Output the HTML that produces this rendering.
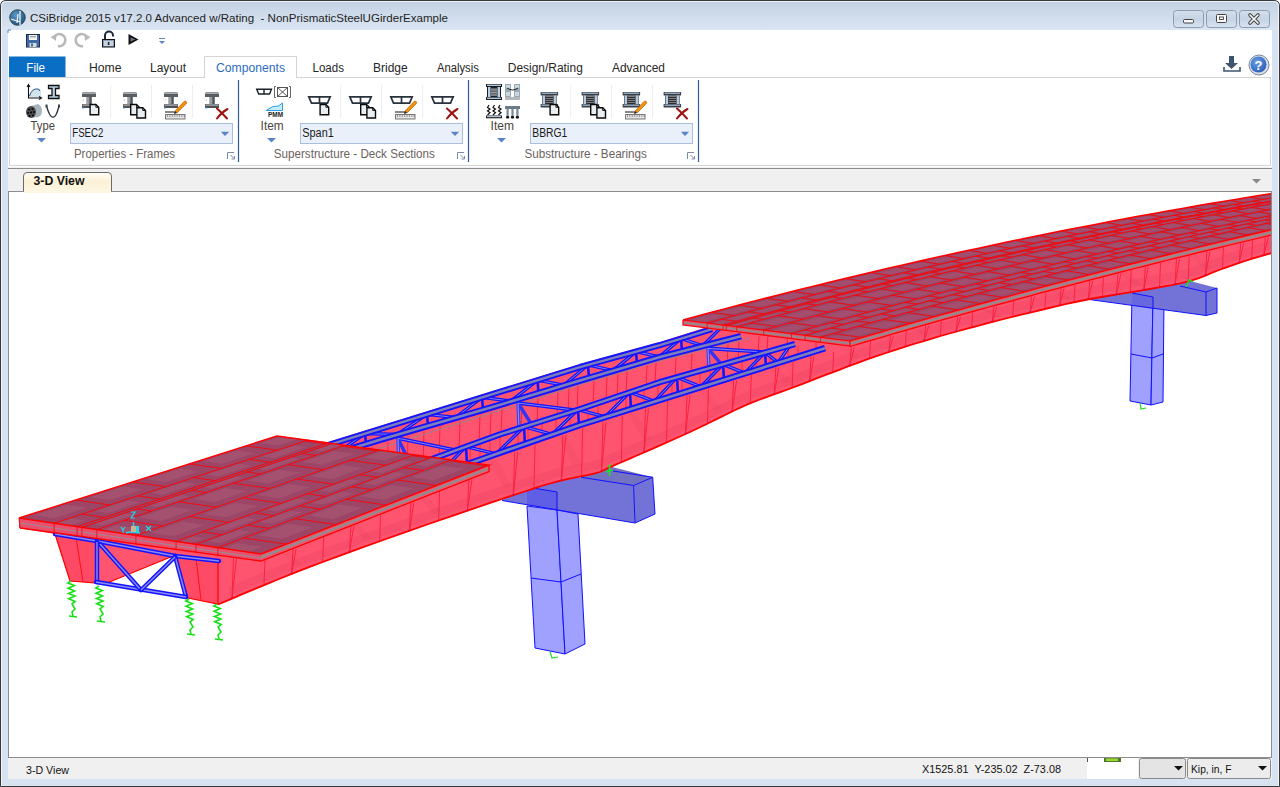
<!DOCTYPE html><html><head><meta charset="utf-8"><style>
*{margin:0;padding:0}
html,body{width:1280px;height:787px;overflow:hidden;background:#fff;font-family:"Liberation Sans",sans-serif}
svg{position:absolute;left:0;top:0}
</style></head><body>
<svg width="1280" height="787" font-family="Liberation Sans">
<defs>
 <linearGradient id="tg" x1="0" y1="0" x2="0" y2="1"><stop offset="0" stop-color="#c2d1e3"/><stop offset="0.6" stop-color="#d2deed"/><stop offset="1" stop-color="#d9e5f2"/></linearGradient>
 <linearGradient id="bg" x1="0" y1="0" x2="0" y2="1"><stop offset="0" stop-color="#d6e0ec"/><stop offset="0.5" stop-color="#c5d3e4"/><stop offset="1" stop-color="#d8e3f0"/></linearGradient>
 <linearGradient id="tabg" x1="0" y1="0" x2="0" y2="1"><stop offset="0" stop-color="#fffdf4"/><stop offset="0.5" stop-color="#fcf1d6"/><stop offset="1" stop-color="#fdf6e2"/></linearGradient>
 <radialGradient id="lg" cx="40%" cy="35%" r="70%"><stop offset="0" stop-color="#5a9ac8"/><stop offset="1" stop-color="#1d4f78"/></radialGradient>
 <radialGradient id="hg" cx="40%" cy="35%" r="70%"><stop offset="0" stop-color="#6aa0e8"/><stop offset="1" stop-color="#2a5cb8"/></radialGradient>
</defs>
<!-- window frame -->
<path d="M0.5,786.5 V6 Q0.5,0.5 6,0.5 H1274 Q1279.5,0.5 1279.5,6 V786.5 Z" fill="#d7e3f1" stroke="#3a3a3a"/>
<path d="M1.5,30 V6.5 Q1.5,1.5 6.5,1.5 H1273.5 Q1278.5,1.5 1278.5,6.5 V30 Z" fill="url(#tg)"/>
<path d="M1.5,786 V7 Q1.5,1.5 7,1.5 H1273 Q1278.5,1.5 1278.5,7 V786" fill="none" stroke="#f2f6fb" stroke-width="1" opacity="0.8"/>
<circle cx="17.5" cy="17.5" r="7.8" fill="url(#lg)" stroke="#2a3a48" stroke-width="0.8"/>
<path d="M20,11 V25 M18,14 L17,23 M11,19 L20,22" stroke="#f0f4f8" stroke-width="1.3" fill="none"/>
<text x="30" y="22.4" font-size="11.5" fill="#1e1e1e" font-weight="normal" textLength="418" lengthAdjust="spacingAndGlyphs" xml:space="preserve">CSiBridge 2015 v17.2.0 Advanced w/Rating&#160;&#160;- NonPrismaticSteelUGirderExample</text>
<rect x="1173.5" y="10.5" width="30" height="17" rx="3" fill="url(#bg)" stroke="#8d9bb0"/>
<rect x="1206.5" y="10.5" width="30" height="17" rx="3" fill="url(#bg)" stroke="#8d9bb0"/>
<rect x="1239.5" y="10.5" width="30" height="17" rx="3" fill="url(#bg)" stroke="#8d9bb0"/>
<rect x="1183.5" y="19.5" width="10" height="3.5" rx="1" fill="#f8f8f8" stroke="#444"/>
<rect x="1216.5" y="14.5" width="10" height="8" rx="1" fill="#f8f8f8" stroke="#444"/><rect x="1219.5" y="17" width="4" height="2.5" fill="none" stroke="#444" stroke-width="0.9"/>
<path d="M1250,15 L1258,23 M1258,15 L1250,23" stroke="#444" stroke-width="3.6" stroke-linecap="round"/><path d="M1250,15 L1258,23 M1258,15 L1250,23" stroke="#fafafa" stroke-width="1.6" stroke-linecap="round"/>
<!-- content -->
<rect x="8" y="30" width="1264" height="749" fill="#fff"/>
<path d="M8,30 h3 M8,30 v3" stroke="#5b83c8" stroke-width="1"/>
<!-- QAT -->
<g transform="translate(26,34)"><rect x="0.5" y="0.5" width="13" height="12.5" fill="#3f6aa8" stroke="#1e2e44"/><rect x="3" y="1" width="8" height="5" fill="#f4f4f4"/><line x1="4" y1="2.8" x2="10" y2="2.8" stroke="#555" stroke-width="0.7"/><rect x="3.5" y="9" width="7" height="4" fill="#d8d8d8"/><rect x="5" y="9.5" width="2" height="3" fill="#3f6aa8"/></g>
<path d="M58,46 A6,6 0 1 0 54.5,36.5" fill="none" stroke="#b8b8b8" stroke-width="2.6"/><path d="M50.5,37 L56.5,34 L56,41 Z" fill="#b8b8b8"/>
<path d="M83,46 A6,6 0 1 1 86.5,36.5" fill="none" stroke="#b8b8b8" stroke-width="2.6"/><path d="M90.5,37 L84.5,34 L85,41 Z" fill="#b8b8b8"/>
<path d="M105,39 v-3.5 a4,4 0 0 1 8,0 v1" fill="none" stroke="#1a2a3a" stroke-width="2"/><rect x="102.5" y="39.5" width="12" height="7.5" fill="#8aa0b8" stroke="#111"/><rect x="104" y="41" width="9" height="5" fill="#c8d4e0"/><rect x="107.8" y="42" width="1.6" height="3" fill="#222"/>
<path d="M128.5,34 l10,5.5 -10,5.5z" fill="#111"/><path d="M130.5,37.5 l5,2 -5,2z" fill="#6a7888"/>
<path d="M159,41 h6 l-3,3z" fill="#5b83c8"/><line x1="159" y1="38.5" x2="165" y2="38.5" stroke="#5b83c8"/>
<!-- tabs -->
<rect x="9" y="56.5" width="56.5" height="20.5" fill="#0b6ec5"/>
<text x="26.3" y="72" font-size="12" fill="#ffffff" font-weight="normal" textLength="18.8" lengthAdjust="spacingAndGlyphs" >File</text>
<path d="M9,77.5 H204.5 V56.5 H296.5 V77.5 H1270.5" fill="none" stroke="#d4d4d4"/>
<rect x="205" y="57" width="91" height="21" fill="#fff"/>
<text x="89" y="72" font-size="12" fill="#262626" font-weight="normal" textLength="32.5" lengthAdjust="spacingAndGlyphs" >Home</text><text x="150" y="72" font-size="12" fill="#262626" font-weight="normal" textLength="36" lengthAdjust="spacingAndGlyphs" >Layout</text><text x="216" y="72" font-size="12" fill="#2b6bbf" font-weight="normal" textLength="69" lengthAdjust="spacingAndGlyphs" >Components</text><text x="312.5" y="72" font-size="12" fill="#262626" font-weight="normal" textLength="31.5" lengthAdjust="spacingAndGlyphs" >Loads</text><text x="373" y="72" font-size="12" fill="#262626" font-weight="normal" textLength="34.7" lengthAdjust="spacingAndGlyphs" >Bridge</text><text x="437" y="72" font-size="12" fill="#262626" font-weight="normal" textLength="41.8" lengthAdjust="spacingAndGlyphs" >Analysis</text><text x="507.8" y="72" font-size="12" fill="#262626" font-weight="normal" textLength="75" lengthAdjust="spacingAndGlyphs" >Design/Rating</text><text x="612" y="72" font-size="12" fill="#262626" font-weight="normal" textLength="53" lengthAdjust="spacingAndGlyphs" >Advanced</text>
<rect x="9.5" y="77.5" width="1261" height="88" fill="#fff" stroke="#d4d4d4"/>
<rect x="205" y="76.5" width="91" height="2" fill="#fff"/>
<line x1="238.5" y1="80" x2="238.5" y2="162" stroke="#2d5aa0" stroke-width="1.2"/>
<line x1="468.5" y1="80" x2="468.5" y2="162" stroke="#2d5aa0" stroke-width="1.2"/>
<line x1="698.5" y1="80" x2="698.5" y2="162" stroke="#2d5aa0" stroke-width="1.2"/>
<line x1="110.7" y1="85" x2="110.7" y2="118" stroke="#eceef2" stroke-width="1"/><line x1="151.5" y1="85" x2="151.5" y2="118" stroke="#eceef2" stroke-width="1"/><line x1="192.6" y1="85" x2="192.6" y2="118" stroke="#eceef2" stroke-width="1"/><g transform="translate(82,92)"><path d="M1,0 H13 L14,2 V5 H0 V2 Z" fill="#5a5e62"/><path d="M1,0.3 H13 L13.8,2 H0.4 Z" fill="#a8acb0"/><rect x="4.5" y="5" width="5" height="7" fill="#6a6e72"/><rect x="5" y="5" width="2" height="7" fill="#9a9ea2"/><rect x="8.5" y="5" width="1" height="7" fill="#3a3e42"/><path d="M0,12 H14 V16 H0 Z" fill="#4e5256"/><rect x="0.5" y="12.3" width="13" height="1.6" fill="#9a9ea2"/><path d="M0,8 l2,-1.5 v3 z" fill="#dde" /><rect x="0" y="15.5" width="2" height="1" fill="#4aa0e0"/></g><g transform="translate(89.4,103.8)"><path d="M0.7,0.7 H6.5 L9.3,3.5 V11 H0.7 Z" fill="#e8eef2" stroke="#0a0a0a" stroke-width="1.4"/><path d="M6.5,0.7 V3.5 H9.3" fill="none" stroke="#0a0a0a" stroke-width="0.9"/></g><g transform="translate(123,92)"><path d="M1,0 H13 L14,2 V5 H0 V2 Z" fill="#5a5e62"/><path d="M1,0.3 H13 L13.8,2 H0.4 Z" fill="#a8acb0"/><rect x="4.5" y="5" width="5" height="7" fill="#6a6e72"/><rect x="5" y="5" width="2" height="7" fill="#9a9ea2"/><rect x="8.5" y="5" width="1" height="7" fill="#3a3e42"/><path d="M0,12 H14 V16 H0 Z" fill="#4e5256"/><rect x="0.5" y="12.3" width="13" height="1.6" fill="#9a9ea2"/><path d="M0,8 l2,-1.5 v3 z" fill="#dde" /><rect x="0" y="15.5" width="2" height="1" fill="#4aa0e0"/></g><g transform="translate(130,103.8)"><path d="M0.7,0.7 H6.5 L9.3,3.5 V11 H0.7 Z" fill="#e8eef2" stroke="#0a0a0a" stroke-width="1.4"/><path d="M6.5,0.7 V3.5 H9.3" fill="none" stroke="#0a0a0a" stroke-width="0.9"/></g><g transform="translate(136.2,107)"><path d="M0.7,0.7 H6.5 L9.3,3.5 V11 H0.7 Z" fill="#e8eef2" stroke="#0a0a0a" stroke-width="1.4"/><path d="M6.5,0.7 V3.5 H9.3" fill="none" stroke="#0a0a0a" stroke-width="0.9"/></g><g transform="translate(164,92)"><path d="M1,0 H13 L14,2 V5 H0 V2 Z" fill="#5a5e62"/><path d="M1,0.3 H13 L13.8,2 H0.4 Z" fill="#a8acb0"/><rect x="4.5" y="5" width="5" height="7" fill="#6a6e72"/><rect x="5" y="5" width="2" height="7" fill="#9a9ea2"/><rect x="8.5" y="5" width="1" height="7" fill="#3a3e42"/><path d="M0,12 H14 V16 H0 Z" fill="#4e5256"/><rect x="0.5" y="12.3" width="13" height="1.6" fill="#9a9ea2"/><path d="M0,8 l2,-1.5 v3 z" fill="#dde" /><rect x="0" y="15.5" width="2" height="1" fill="#4aa0e0"/></g><g transform="translate(165,114)"><rect x="0.5" y="0.5" width="19.5" height="4.5" fill="#e4e4e4" stroke="#787878"/><line x1="2.5" y1="1" x2="2.5" y2="3" stroke="#777" stroke-width="0.7"/><line x1="4.9" y1="1" x2="4.9" y2="3" stroke="#777" stroke-width="0.7"/><line x1="7.3" y1="1" x2="7.3" y2="3" stroke="#777" stroke-width="0.7"/><line x1="9.7" y1="1" x2="9.7" y2="3" stroke="#777" stroke-width="0.7"/><line x1="12.1" y1="1" x2="12.1" y2="3" stroke="#777" stroke-width="0.7"/><line x1="14.5" y1="1" x2="14.5" y2="3" stroke="#777" stroke-width="0.7"/><line x1="16.9" y1="1" x2="16.9" y2="3" stroke="#777" stroke-width="0.7"/><line x1="19.3" y1="1" x2="19.3" y2="3" stroke="#777" stroke-width="0.7"/></g><line x1="165" y1="112" x2="175" y2="112" stroke="#111" stroke-width="1"/><g transform="translate(175,100)"><path d="M0,11 L9,1.5 Q10.5,0.5 11.5,1.8 Q12.2,3 11,4 L2,13 Z" fill="#f0900c" stroke="#b05a00" stroke-width="0.6"/><path d="M0,11 L2,13 L-1,14 Z" fill="#222"/></g><g transform="translate(205,92)"><path d="M1,0 H13 L14,2 V5 H0 V2 Z" fill="#5a5e62"/><path d="M1,0.3 H13 L13.8,2 H0.4 Z" fill="#a8acb0"/><rect x="4.5" y="5" width="5" height="7" fill="#6a6e72"/><rect x="5" y="5" width="2" height="7" fill="#9a9ea2"/><rect x="8.5" y="5" width="1" height="7" fill="#3a3e42"/><path d="M0,12 H14 V16 H0 Z" fill="#4e5256"/><rect x="0.5" y="12.3" width="13" height="1.6" fill="#9a9ea2"/><path d="M0,8 l2,-1.5 v3 z" fill="#dde" /><rect x="0" y="15.5" width="2" height="1" fill="#4aa0e0"/></g><g transform="translate(216,108)" stroke="#a01414" stroke-width="2" stroke-linecap="round"><path d="M1,0.5 Q6,5 11,10.5"/><path d="M11.5,1 Q6,4 1,10.5"/></g><rect x="70.5" y="123.5" width="162" height="20" fill="#e9f0fa" stroke="#a9bfdc" stroke-width="1"/><path d="M220.8,131.8 h8.4 l-4.2,4.3 z" fill="#5b83c8"/><text x="72.3" y="137" font-size="12" fill="#1a1a1a" font-weight="normal" textLength="31" lengthAdjust="spacingAndGlyphs" >FSEC2</text><text x="74" y="157.5" font-size="12" fill="#6a625e" font-weight="normal" textLength="101" lengthAdjust="spacingAndGlyphs" >Properties - Frames</text><g stroke="#7a8aa8" stroke-width="1" fill="none"><path d="M227.5,159 v-6.5 h6.5"/><path d="M230.5,155 l3.5,3.5 m-2.5,0.5 h3 v-3"/></g><text x="30.6" y="130.3" font-size="12" fill="#4a4440" font-weight="normal" textLength="24.4" lengthAdjust="spacingAndGlyphs" >Type</text><path d="M37,138 h9 l-4.5,4.5 z" fill="#5b83c8"/><line x1="340.7" y1="85" x2="340.7" y2="118" stroke="#eceef2" stroke-width="1"/><line x1="381.5" y1="85" x2="381.5" y2="118" stroke="#eceef2" stroke-width="1"/><line x1="422.6" y1="85" x2="422.6" y2="118" stroke="#eceef2" stroke-width="1"/><g transform="translate(308,96)" fill="#ffffff" stroke="#28323c" stroke-width="1.7"><path d="M0.8,0.8 H22.2 L19.5,7.2 H3.5 Z"/><line x1="11.5" y1="0.8" x2="11.5" y2="7.2"/></g><g transform="translate(319.4,103.8)"><path d="M0.7,0.7 H6.5 L9.3,3.5 V11 H0.7 Z" fill="#e8eef2" stroke="#0a0a0a" stroke-width="1.4"/><path d="M6.5,0.7 V3.5 H9.3" fill="none" stroke="#0a0a0a" stroke-width="0.9"/></g><g transform="translate(349,96)" fill="#ffffff" stroke="#28323c" stroke-width="1.7"><path d="M0.8,0.8 H22.2 L19.5,7.2 H3.5 Z"/><line x1="11.5" y1="0.8" x2="11.5" y2="7.2"/></g><g transform="translate(360,103.8)"><path d="M0.7,0.7 H6.5 L9.3,3.5 V11 H0.7 Z" fill="#e8eef2" stroke="#0a0a0a" stroke-width="1.4"/><path d="M6.5,0.7 V3.5 H9.3" fill="none" stroke="#0a0a0a" stroke-width="0.9"/></g><g transform="translate(366.2,107)"><path d="M0.7,0.7 H6.5 L9.3,3.5 V11 H0.7 Z" fill="#e8eef2" stroke="#0a0a0a" stroke-width="1.4"/><path d="M6.5,0.7 V3.5 H9.3" fill="none" stroke="#0a0a0a" stroke-width="0.9"/></g><g transform="translate(390,96)" fill="#ffffff" stroke="#28323c" stroke-width="1.7"><path d="M0.8,0.8 H22.2 L19.5,7.2 H3.5 Z"/><line x1="11.5" y1="0.8" x2="11.5" y2="7.2"/></g><g transform="translate(395,114)"><rect x="0.5" y="0.5" width="19.5" height="4.5" fill="#e4e4e4" stroke="#787878"/><line x1="2.5" y1="1" x2="2.5" y2="3" stroke="#777" stroke-width="0.7"/><line x1="4.9" y1="1" x2="4.9" y2="3" stroke="#777" stroke-width="0.7"/><line x1="7.3" y1="1" x2="7.3" y2="3" stroke="#777" stroke-width="0.7"/><line x1="9.7" y1="1" x2="9.7" y2="3" stroke="#777" stroke-width="0.7"/><line x1="12.1" y1="1" x2="12.1" y2="3" stroke="#777" stroke-width="0.7"/><line x1="14.5" y1="1" x2="14.5" y2="3" stroke="#777" stroke-width="0.7"/><line x1="16.9" y1="1" x2="16.9" y2="3" stroke="#777" stroke-width="0.7"/><line x1="19.3" y1="1" x2="19.3" y2="3" stroke="#777" stroke-width="0.7"/></g><line x1="395" y1="112" x2="405" y2="112" stroke="#111" stroke-width="1"/><g transform="translate(405,100)"><path d="M0,11 L9,1.5 Q10.5,0.5 11.5,1.8 Q12.2,3 11,4 L2,13 Z" fill="#f0900c" stroke="#b05a00" stroke-width="0.6"/><path d="M0,11 L2,13 L-1,14 Z" fill="#222"/></g><g transform="translate(431,96)" fill="#ffffff" stroke="#28323c" stroke-width="1.7"><path d="M0.8,0.8 H22.2 L19.5,7.2 H3.5 Z"/><line x1="11.5" y1="0.8" x2="11.5" y2="7.2"/></g><g transform="translate(446,108)" stroke="#a01414" stroke-width="2" stroke-linecap="round"><path d="M1,0.5 Q6,5 11,10.5"/><path d="M11.5,1 Q6,4 1,10.5"/></g><rect x="300.5" y="123.5" width="162" height="20" fill="#e9f0fa" stroke="#a9bfdc" stroke-width="1"/><path d="M450.8,131.8 h8.4 l-4.2,4.3 z" fill="#5b83c8"/><text x="302.3" y="137" font-size="12" fill="#1a1a1a" font-weight="normal" textLength="31.5" lengthAdjust="spacingAndGlyphs" >Span1</text><text x="273.8" y="157.5" font-size="12" fill="#6a625e" font-weight="normal" textLength="161" lengthAdjust="spacingAndGlyphs" >Superstructure - Deck Sections</text><g stroke="#7a8aa8" stroke-width="1" fill="none"><path d="M457.5,159 v-6.5 h6.5"/><path d="M460.5,155 l3.5,3.5 m-2.5,0.5 h3 v-3"/></g><text x="260.6" y="130.3" font-size="12" fill="#4a4440" font-weight="normal" textLength="23" lengthAdjust="spacingAndGlyphs" >Item</text><path d="M267,138 h9 l-4.5,4.5 z" fill="#5b83c8"/><line x1="570.7" y1="85" x2="570.7" y2="118" stroke="#eceef2" stroke-width="1"/><line x1="611.5" y1="85" x2="611.5" y2="118" stroke="#eceef2" stroke-width="1"/><line x1="652.6" y1="85" x2="652.6" y2="118" stroke="#eceef2" stroke-width="1"/><g transform="translate(540.6,92)"><rect x="0" y="0" width="17.5" height="3.5" rx="0.5" fill="#3a4048"/><rect x="1" y="0.6" width="15.5" height="1.2" fill="#a8c0d8"/><rect x="0" y="12" width="17.5" height="3.5" rx="0.5" fill="#3a4048"/><rect x="1" y="12.6" width="15.5" height="1.2" fill="#a8c0d8"/><rect x="1.5" y="3.5" width="14.5" height="8.5" fill="#2a2e34"/><rect x="2" y="3.5" width="2.5" height="8.5" fill="#b8cce0"/><rect x="13" y="3.5" width="2.5" height="8.5" fill="#b8cce0"/><line x1="5" y1="4.5" x2="12.5" y2="4.5" stroke="#8a8a8a" stroke-width="0.9"/><line x1="5" y1="6.5" x2="12.5" y2="6.5" stroke="#8a8a8a" stroke-width="0.9"/><line x1="5" y1="8.5" x2="12.5" y2="8.5" stroke="#8a8a8a" stroke-width="0.9"/><line x1="5" y1="10.5" x2="12.5" y2="10.5" stroke="#8a8a8a" stroke-width="0.9"/></g><g transform="translate(549.4,103.8)"><path d="M0.7,0.7 H6.5 L9.3,3.5 V11 H0.7 Z" fill="#e8eef2" stroke="#0a0a0a" stroke-width="1.4"/><path d="M6.5,0.7 V3.5 H9.3" fill="none" stroke="#0a0a0a" stroke-width="0.9"/></g><g transform="translate(581.6,92)"><rect x="0" y="0" width="17.5" height="3.5" rx="0.5" fill="#3a4048"/><rect x="1" y="0.6" width="15.5" height="1.2" fill="#a8c0d8"/><rect x="0" y="12" width="17.5" height="3.5" rx="0.5" fill="#3a4048"/><rect x="1" y="12.6" width="15.5" height="1.2" fill="#a8c0d8"/><rect x="1.5" y="3.5" width="14.5" height="8.5" fill="#2a2e34"/><rect x="2" y="3.5" width="2.5" height="8.5" fill="#b8cce0"/><rect x="13" y="3.5" width="2.5" height="8.5" fill="#b8cce0"/><line x1="5" y1="4.5" x2="12.5" y2="4.5" stroke="#8a8a8a" stroke-width="0.9"/><line x1="5" y1="6.5" x2="12.5" y2="6.5" stroke="#8a8a8a" stroke-width="0.9"/><line x1="5" y1="8.5" x2="12.5" y2="8.5" stroke="#8a8a8a" stroke-width="0.9"/><line x1="5" y1="10.5" x2="12.5" y2="10.5" stroke="#8a8a8a" stroke-width="0.9"/></g><g transform="translate(590,103.8)"><path d="M0.7,0.7 H6.5 L9.3,3.5 V11 H0.7 Z" fill="#e8eef2" stroke="#0a0a0a" stroke-width="1.4"/><path d="M6.5,0.7 V3.5 H9.3" fill="none" stroke="#0a0a0a" stroke-width="0.9"/></g><g transform="translate(596.2,107)"><path d="M0.7,0.7 H6.5 L9.3,3.5 V11 H0.7 Z" fill="#e8eef2" stroke="#0a0a0a" stroke-width="1.4"/><path d="M6.5,0.7 V3.5 H9.3" fill="none" stroke="#0a0a0a" stroke-width="0.9"/></g><g transform="translate(622.6,92)"><rect x="0" y="0" width="17.5" height="3.5" rx="0.5" fill="#3a4048"/><rect x="1" y="0.6" width="15.5" height="1.2" fill="#a8c0d8"/><rect x="0" y="12" width="17.5" height="3.5" rx="0.5" fill="#3a4048"/><rect x="1" y="12.6" width="15.5" height="1.2" fill="#a8c0d8"/><rect x="1.5" y="3.5" width="14.5" height="8.5" fill="#2a2e34"/><rect x="2" y="3.5" width="2.5" height="8.5" fill="#b8cce0"/><rect x="13" y="3.5" width="2.5" height="8.5" fill="#b8cce0"/><line x1="5" y1="4.5" x2="12.5" y2="4.5" stroke="#8a8a8a" stroke-width="0.9"/><line x1="5" y1="6.5" x2="12.5" y2="6.5" stroke="#8a8a8a" stroke-width="0.9"/><line x1="5" y1="8.5" x2="12.5" y2="8.5" stroke="#8a8a8a" stroke-width="0.9"/><line x1="5" y1="10.5" x2="12.5" y2="10.5" stroke="#8a8a8a" stroke-width="0.9"/></g><g transform="translate(625,114)"><rect x="0.5" y="0.5" width="19.5" height="4.5" fill="#e4e4e4" stroke="#787878"/><line x1="2.5" y1="1" x2="2.5" y2="3" stroke="#777" stroke-width="0.7"/><line x1="4.9" y1="1" x2="4.9" y2="3" stroke="#777" stroke-width="0.7"/><line x1="7.3" y1="1" x2="7.3" y2="3" stroke="#777" stroke-width="0.7"/><line x1="9.7" y1="1" x2="9.7" y2="3" stroke="#777" stroke-width="0.7"/><line x1="12.1" y1="1" x2="12.1" y2="3" stroke="#777" stroke-width="0.7"/><line x1="14.5" y1="1" x2="14.5" y2="3" stroke="#777" stroke-width="0.7"/><line x1="16.9" y1="1" x2="16.9" y2="3" stroke="#777" stroke-width="0.7"/><line x1="19.3" y1="1" x2="19.3" y2="3" stroke="#777" stroke-width="0.7"/></g><line x1="625" y1="112" x2="635" y2="112" stroke="#111" stroke-width="1"/><g transform="translate(635,100)"><path d="M0,11 L9,1.5 Q10.5,0.5 11.5,1.8 Q12.2,3 11,4 L2,13 Z" fill="#f0900c" stroke="#b05a00" stroke-width="0.6"/><path d="M0,11 L2,13 L-1,14 Z" fill="#222"/></g><g transform="translate(663.6,92)"><rect x="0" y="0" width="17.5" height="3.5" rx="0.5" fill="#3a4048"/><rect x="1" y="0.6" width="15.5" height="1.2" fill="#a8c0d8"/><rect x="0" y="12" width="17.5" height="3.5" rx="0.5" fill="#3a4048"/><rect x="1" y="12.6" width="15.5" height="1.2" fill="#a8c0d8"/><rect x="1.5" y="3.5" width="14.5" height="8.5" fill="#2a2e34"/><rect x="2" y="3.5" width="2.5" height="8.5" fill="#b8cce0"/><rect x="13" y="3.5" width="2.5" height="8.5" fill="#b8cce0"/><line x1="5" y1="4.5" x2="12.5" y2="4.5" stroke="#8a8a8a" stroke-width="0.9"/><line x1="5" y1="6.5" x2="12.5" y2="6.5" stroke="#8a8a8a" stroke-width="0.9"/><line x1="5" y1="8.5" x2="12.5" y2="8.5" stroke="#8a8a8a" stroke-width="0.9"/><line x1="5" y1="10.5" x2="12.5" y2="10.5" stroke="#8a8a8a" stroke-width="0.9"/></g><g transform="translate(676,108)" stroke="#a01414" stroke-width="2" stroke-linecap="round"><path d="M1,0.5 Q6,5 11,10.5"/><path d="M11.5,1 Q6,4 1,10.5"/></g><rect x="530.5" y="123.5" width="162" height="20" fill="#e9f0fa" stroke="#a9bfdc" stroke-width="1"/><path d="M680.8,131.8 h8.4 l-4.2,4.3 z" fill="#5b83c8"/><text x="532.3" y="137" font-size="12" fill="#1a1a1a" font-weight="normal" textLength="35" lengthAdjust="spacingAndGlyphs" >BBRG1</text><text x="524.4" y="157.5" font-size="12" fill="#6a625e" font-weight="normal" textLength="122.5" lengthAdjust="spacingAndGlyphs" >Substructure - Bearings</text><g stroke="#7a8aa8" stroke-width="1" fill="none"><path d="M687.5,159 v-6.5 h6.5"/><path d="M690.5,155 l3.5,3.5 m-2.5,0.5 h3 v-3"/></g><text x="490.6" y="130.3" font-size="12" fill="#4a4440" font-weight="normal" textLength="23.4" lengthAdjust="spacingAndGlyphs" >Item</text><path d="M497,138 h9 l-4.5,4.5 z" fill="#5b83c8"/><path d="M28.5,97 Q31,87 38,89 L41,90 V97.5 Z" fill="#d4e4ee"/><path d="M29.5,96 Q32,88 38,89 Q40,89.5 39.5,91" fill="none" stroke="#2a5a88" stroke-width="1"/><g stroke="#111" fill="none" stroke-width="1.1"><path d="M28.5,85 V98 H41"/><path d="M27,87 l1.5,-2.5 1.5,2.5 M39,96.5 l2.5,1.5 -2.5,1.5"/></g><path d="M48.5,85.5 H59 V88.5 H55.5 V95.5 H59 V98.5 H48.5 V95.5 H52 V88.5 H48.5 Z" fill="#b8d0e0" stroke="#111" stroke-width="1.3"/><path d="M31,106 L38,104 Q42,106 42,111 Q42,116 38,117 L31,118 Z" fill="#a8b4bc"/><ellipse cx="31" cy="112" rx="5" ry="6" fill="#4a4e52"/><g fill="#0a0a0a"><circle cx="29" cy="109.5" r="1.1"/><circle cx="32.5" cy="109" r="1.1"/><circle cx="28" cy="113" r="1.1"/><circle cx="31" cy="112.5" r="1.1"/><circle cx="34" cy="112" r="1.1"/><circle cx="29.5" cy="116" r="1.1"/><circle cx="33" cy="115.5" r="1.1"/></g><path d="M46.5,106 Q50,118 53,117 Q56,118 59,106" fill="none" stroke="#2a3038" stroke-width="1.3"/><rect x="45.5" y="104.5" width="2" height="3" fill="#3a4048"/><rect x="58" y="104.5" width="2" height="3" fill="#3a4048"/><g transform="translate(256,88.5)" fill="#fff" stroke="#1a2028" stroke-width="1.4"><path d="M0.7,0.7 H15.5 L13.5,5.5 H2.7 Z"/><line x1="8" y1="0.7" x2="8" y2="5.5"/></g><g stroke="#555" fill="none" stroke-width="1"><rect x="277.5" y="87.5" width="10" height="9"/><path d="M277.5,87.5 L287.5,96.5 M287.5,87.5 L277.5,96.5"/><path d="M276,86.5 h-1.5 v11 h1.5 M289,86.5 h1.5 v11 h-1.5" stroke-width="0.9"/></g><path d="M266,110.5 L273,106.5 L278.5,106 L282.5,103 V110.5 Z" fill="#c8ecfc" stroke="#2aa0e0" stroke-width="1"/><text x="268" y="117.3" font-size="7" font-weight="bold" fill="#1a1a1a" textLength="15" lengthAdjust="spacingAndGlyphs">PMM</text><g transform="translate(486,84)"><rect x="0" y="0" width="16" height="3" fill="#1a1e24"/><rect x="1" y="0.6" width="14" height="1.4" fill="#b0c8dc"/><rect x="0" y="13" width="16" height="3" fill="#1a1e24"/><rect x="1" y="13.6" width="14" height="1.4" fill="#b0c8dc"/><rect x="1" y="3" width="14" height="10" fill="#1a1e24"/><rect x="2" y="3" width="2.5" height="10" fill="#b8d0e4"/><rect x="11.5" y="3" width="2.5" height="10" fill="#b8d0e4"/><rect x="5" y="4" width="6" height="8" fill="#606468"/><line x1="5" y1="6" x2="11" y2="6" stroke="#b0b0b0" stroke-width="0.8"/><line x1="5" y1="8.5" x2="11" y2="8.5" stroke="#b0b0b0" stroke-width="0.8"/><line x1="5" y1="11" x2="11" y2="11" stroke="#b0b0b0" stroke-width="0.8"/></g><g transform="translate(505,84)"><rect x="0" y="0" width="6" height="13" fill="#9aaab4"/><rect x="9" y="0" width="6" height="13" fill="#9aaab4"/><rect x="1" y="1" width="4" height="3" fill="#c8d8e0"/><rect x="10" y="1" width="4" height="3" fill="#c8d8e0"/><rect x="1" y="8" width="4" height="4" fill="#c8d8e0"/><rect x="10" y="8" width="4" height="4" fill="#c8d8e0"/><path d="M2,4 Q7.5,8 13,4" stroke="#222" fill="none" stroke-width="1"/><rect x="0" y="13" width="15" height="3" fill="#b4b8bc"/></g><g stroke="#111" stroke-width="1.2" fill="none"><path d="M489,105 l-1.5,2.5 2.5,1.5 -2.5,2 2.5,1.5 -2.5,2.5 M494.5,105 l-1.5,2.5 2.5,1.5 -2.5,2 2.5,1.5 -2.5,2.5 M500,105 l-1.5,2.5 2.5,1.5 -2.5,2 2.5,1.5 -2.5,2.5"/></g><rect x="486" y="115.5" width="16" height="2.8" fill="#1a1e24"/><rect x="487" y="116" width="14" height="1.2" fill="#b0c0cc"/><rect x="505" y="106" width="15" height="3" fill="#6a7a88"/><g fill="#7a8a98"><rect x="506.5" y="109" width="2.2" height="7"/><rect x="511.4" y="109" width="2.2" height="7"/><rect x="516.3" y="109" width="2.2" height="7"/></g><g fill="#111"><rect x="506" y="116" width="3.2" height="2.4" rx="1"/><rect x="510.9" y="116" width="3.2" height="2.4" rx="1"/><rect x="515.8" y="116" width="3.2" height="2.4" rx="1"/></g>
<path d="M1229,56 h5 v7 h4 l-6.5,6 -6.5,-6 h4z" fill="#3d5470"/><path d="M1224,67 v4 h16 v-4" fill="none" stroke="#3d5470" stroke-width="1.6"/>
<circle cx="1259" cy="65" r="10" fill="#d8dde6" stroke="#7a8696" stroke-width="1"/>
<circle cx="1258.5" cy="64.5" r="8" fill="url(#hg)"/>
<text x="1258.5" y="70" font-size="13" font-weight="bold" fill="#fff" text-anchor="middle">?</text>
<!-- doc tab strip -->
<rect x="8" y="166" width="1264" height="26" fill="#f0f0f0"/>
<line x1="8" y1="166.5" x2="1272" y2="166.5" stroke="#fff"/>
<line x1="8" y1="168.5" x2="1272" y2="168.5" stroke="#8c8c8c"/>
<path d="M1252,179 h9 l-4.5,4.5z" fill="#888"/>
<path d="M23.5,191 V176 Q23.5,172.5 27,172.5 H108 Q111.5,172.5 111.5,176 V191" fill="url(#tabg)" stroke="#6a6a6a"/>
<text x="33.5" y="184.7" font-size="12" fill="#111" font-weight="bold" textLength="51" lengthAdjust="spacingAndGlyphs" >3-D View</text>
<!-- view -->
<rect x="8.5" y="191.5" width="1263" height="566" fill="#fff" stroke="#8c8c8c"/>
<rect x="24" y="190" width="87" height="3" fill="#fdf6e2"/>
<svg x="9" y="192" width="1262" height="565" viewBox="9 192 1262 565" overflow="hidden">
<polygon points="527.0,506.0 557.0,510.0 565.0,654.0 535.0,648.0" fill="#a0a0ff" stroke="#1010ff" stroke-width="1" />
<polygon points="557.0,510.0 578.0,514.0 585.0,644.0 565.0,654.0" fill="#a0a0ff" stroke="#1010ff" stroke-width="1" />
<polyline points="531.0,578.0 561.0,582.0 581.0,574.0" fill="none" stroke="#1010ff" stroke-width="1" />
<polygon points="498.0,478.0 581.0,477.3 633.6,485.5 635.0,523.0 502.0,500.5" fill="#7373d7" stroke="none" stroke-width="1" />
<polygon points="575.0,477.0 612.0,467.0 652.7,477.3 633.6,485.5 581.0,477.3" fill="#7272c0" stroke="none" stroke-width="1" />
<polygon points="527.0,487.0 557.0,492.0 557.0,510.0 527.0,505.0" fill="#5f5fe6" stroke="none" stroke-width="1" />
<polyline points="527.0,487.0 557.0,492.0 557.0,510.0" fill="none" stroke="#1010ff" stroke-width="1" />
<polygon points="633.6,485.5 652.7,477.3 655.0,514.0 635.0,523.0" fill="#7373d7" stroke="#1010ff" stroke-width="1" />
<polyline points="610.0,470.5 652.7,477.3" fill="none" stroke="#1010ff" stroke-width="1.1" />
<polyline points="502.0,500.5 635.0,523.0" fill="none" stroke="#1010ff" stroke-width="1" />
<polyline points="581.0,477.3 633.6,485.5" fill="none" stroke="#1010ff" stroke-width="1.1" />
<polyline points="550.0,652.0 552.0,658.0 558.0,657.0" fill="none" stroke="#20e020" stroke-width="1.2" />
<polygon points="1132.0,293.0 1153.0,297.0 1151.0,405.0 1130.0,401.0" fill="#a0a0ff" stroke="#1010ff" stroke-width="1" />
<polygon points="1153.0,297.0 1164.0,300.0 1163.0,402.0 1151.0,405.0" fill="#a0a0ff" stroke="#1010ff" stroke-width="1" />
<polyline points="1131.0,354.0 1152.0,358.0 1163.0,354.0" fill="none" stroke="#1010ff" stroke-width="1" />
<polygon points="1085.0,290.0 1190.0,281.0 1217.0,288.0 1206.0,292.0 1206.0,315.5 1090.0,299.6" fill="#7373d7" stroke="none" stroke-width="1" />
<polygon points="1132.0,293.0 1153.0,297.0 1153.0,309.0 1132.0,305.5" fill="#5f5fe6" stroke="none" stroke-width="1" opacity="0.6"/>
<polyline points="1132.0,293.0 1153.0,297.0 1153.0,309.0" fill="none" stroke="#1010ff" stroke-width="1" />
<polygon points="1206.0,292.0 1217.0,288.0 1217.0,313.0 1206.0,315.5" fill="#7373d7" stroke="#1010ff" stroke-width="1" />
<polyline points="1090.0,299.6 1206.0,315.5" fill="none" stroke="#1010ff" stroke-width="1" />
<polyline points="1180.0,286.0 1206.0,292.0" fill="none" stroke="#1010ff" stroke-width="1" />
<polyline points="1140.0,403.0 1141.0,409.0 1146.0,408.0" fill="none" stroke="#20e020" stroke-width="1.2" />
<polygon points="19.0,518.0 277.0,436.0 328.0,442.0 580.0,364.0 660.0,342.0 707.0,327.0 683.0,325.0 683.0,320.0 697.7,316.0 712.5,312.1 727.2,308.2 741.9,304.3 756.6,300.5 771.4,296.7 786.1,293.0 800.8,289.3 815.5,285.7 830.3,282.1 845.0,278.5 859.7,275.0 874.4,271.5 889.2,268.1 903.9,264.7 918.6,261.3 933.3,258.0 948.1,254.8 962.8,251.5 977.5,248.4 992.2,245.2 1007.0,242.1 1021.7,239.1 1036.4,236.0 1051.1,233.1 1065.9,230.1 1080.6,227.3 1095.3,224.4 1110.0,221.6 1124.8,218.8 1139.5,216.1 1154.2,213.4 1168.9,210.8 1183.7,208.2 1198.4,205.6 1213.1,203.1 1227.8,200.7 1242.6,198.2 1257.3,195.8 1272.0,193.5 1272.0,253.0 1272.0,253.0 1267.1,254.4 1260.1,256.4 1252.3,258.7 1245.0,261.0 1238.5,263.1 1232.1,265.3 1225.7,267.6 1219.0,270.0 1212.2,272.7 1205.4,275.6 1198.1,278.4 1190.0,281.0 1181.2,283.2 1171.9,285.1 1161.7,286.9 1150.0,289.0 1136.1,291.4 1120.3,293.9 1104.4,296.5 1090.0,299.0 1077.7,301.5 1066.6,303.9 1055.9,306.4 1045.0,309.0 1033.3,311.8 1021.2,314.7 1009.8,317.5 1000.0,320.0 992.6,321.9 986.8,323.4 981.4,324.9 975.0,326.6 967.1,328.7 958.5,331.0 949.5,333.5 940.6,336.0 931.8,338.6 922.9,341.3 913.8,344.0 904.7,346.9 895.4,349.9 885.9,353.0 876.4,356.1 867.0,359.4 857.7,362.8 848.5,366.2 839.3,369.8 829.7,373.4 819.8,377.2 809.7,381.1 799.4,385.1 789.0,389.0 778.9,392.6 769.0,396.1 758.5,400.0 746.9,404.7 733.6,410.8 719.1,417.9 704.2,425.2 690.0,432.0 676.1,438.3 662.3,444.4 649.3,450.1 638.0,455.0 628.6,459.1 620.8,462.5 614.1,465.4 608.4,467.9 604.5,469.7 602.3,470.9 599.8,472.0 595.0,473.4 587.0,475.2 576.9,477.2 566.1,479.4 556.0,481.8 548.1,484.0 541.2,486.0 532.7,488.8 520.0,493.0 501.3,499.2 478.4,506.9 453.8,515.3 430.0,523.5 406.8,531.6 383.2,540.0 360.5,548.1 340.0,555.6 322.7,562.0 307.7,567.7 293.6,573.2 279.0,579.0 262.3,585.8 244.7,593.2 229.0,599.9 218.0,604.5 188.0,598.0 97.0,583.0 70.0,581.0 55.0,534.0 19.0,528.0" fill="#ff5470" stroke="none" stroke-width="1" />
<polygon points="107.0,583.0 172.0,556.5 176.0,558.0 186.0,597.0" fill="#ffffff" stroke="none" stroke-width="1" />
<line x1="233.5" y1="557.0" x2="232.0" y2="598.6" stroke="#ff1a3a" stroke-width="0.9" />
<line x1="236.5" y1="557.0" x2="232.0" y2="598.6" stroke="#ff1a3a" stroke-width="0.9" />
<circle cx="232.0" cy="598.1" r="1.2" fill="#8a30d0" opacity="0.8"/>
<line x1="265.0" y1="559.3" x2="264.0" y2="585.1" stroke="#ff1a3a" stroke-width="0.9" />
<line x1="293.1" y1="548.6" x2="291.6" y2="574.0" stroke="#ff1a3a" stroke-width="0.9" />
<line x1="296.1" y1="548.6" x2="291.6" y2="574.0" stroke="#ff1a3a" stroke-width="0.9" />
<circle cx="291.6" cy="573.5" r="1.2" fill="#8a30d0" opacity="0.8"/>
<line x1="323.7" y1="536.4" x2="322.7" y2="562.0" stroke="#ff1a3a" stroke-width="0.9" />
<line x1="350.9" y1="526.0" x2="349.4" y2="552.2" stroke="#ff1a3a" stroke-width="0.9" />
<line x1="353.9" y1="526.0" x2="349.4" y2="552.2" stroke="#ff1a3a" stroke-width="0.9" />
<circle cx="349.4" cy="551.7" r="1.2" fill="#8a30d0" opacity="0.8"/>
<line x1="380.6" y1="514.2" x2="379.6" y2="541.3" stroke="#ff1a3a" stroke-width="0.9" />
<line x1="410.9" y1="502.6" x2="409.4" y2="530.7" stroke="#ff1a3a" stroke-width="0.9" />
<line x1="413.9" y1="502.6" x2="409.4" y2="530.7" stroke="#ff1a3a" stroke-width="0.9" />
<circle cx="409.4" cy="530.2" r="1.2" fill="#8a30d0" opacity="0.8"/>
<line x1="439.6" y1="491.2" x2="438.6" y2="520.5" stroke="#ff1a3a" stroke-width="0.9" />
<line x1="468.9" y1="479.9" x2="467.4" y2="510.7" stroke="#ff1a3a" stroke-width="0.9" />
<line x1="471.9" y1="479.9" x2="467.4" y2="510.7" stroke="#ff1a3a" stroke-width="0.9" />
<circle cx="467.4" cy="510.2" r="1.2" fill="#8a30d0" opacity="0.8"/>
<line x1="514.8" y1="451.9" x2="513.3" y2="495.2" stroke="#ff1a3a" stroke-width="0.9" />
<line x1="517.8" y1="451.9" x2="513.3" y2="495.2" stroke="#ff1a3a" stroke-width="0.9" />
<circle cx="513.3" cy="494.7" r="1.2" fill="#8a30d0" opacity="0.8"/>
<line x1="535.0" y1="444.7" x2="534.0" y2="488.4" stroke="#ff1a3a" stroke-width="0.9" />
<line x1="562.9" y1="435.2" x2="561.4" y2="480.5" stroke="#ff1a3a" stroke-width="0.9" />
<line x1="565.9" y1="435.2" x2="561.4" y2="480.5" stroke="#ff1a3a" stroke-width="0.9" />
<circle cx="561.4" cy="480.0" r="1.2" fill="#8a30d0" opacity="0.8"/>
<line x1="582.6" y1="428.2" x2="581.6" y2="476.3" stroke="#ff1a3a" stroke-width="0.9" />
<line x1="603.0" y1="421.9" x2="601.5" y2="471.2" stroke="#ff1a3a" stroke-width="0.9" />
<line x1="606.0" y1="421.9" x2="601.5" y2="471.2" stroke="#ff1a3a" stroke-width="0.9" />
<circle cx="601.5" cy="470.7" r="1.2" fill="#8a30d0" opacity="0.8"/>
<line x1="622.3" y1="415.7" x2="621.3" y2="462.3" stroke="#ff1a3a" stroke-width="0.9" />
<line x1="645.5" y1="408.5" x2="644.0" y2="452.4" stroke="#ff1a3a" stroke-width="0.9" />
<line x1="648.5" y1="408.5" x2="644.0" y2="452.4" stroke="#ff1a3a" stroke-width="0.9" />
<circle cx="644.0" cy="451.9" r="1.2" fill="#8a30d0" opacity="0.8"/>
<line x1="667.5" y1="401.4" x2="666.5" y2="442.5" stroke="#ff1a3a" stroke-width="0.9" />
<line x1="687.0" y1="395.4" x2="685.5" y2="434.0" stroke="#ff1a3a" stroke-width="0.9" />
<line x1="690.0" y1="395.4" x2="685.5" y2="434.0" stroke="#ff1a3a" stroke-width="0.9" />
<circle cx="685.5" cy="433.5" r="1.2" fill="#8a30d0" opacity="0.8"/>
<line x1="708.4" y1="388.5" x2="707.4" y2="423.7" stroke="#ff1a3a" stroke-width="0.9" />
<line x1="733.6" y1="380.7" x2="732.1" y2="411.6" stroke="#ff1a3a" stroke-width="0.9" />
<line x1="736.6" y1="380.7" x2="732.1" y2="411.6" stroke="#ff1a3a" stroke-width="0.9" />
<circle cx="732.1" cy="411.1" r="1.2" fill="#8a30d0" opacity="0.8"/>
<line x1="751.3" y1="374.9" x2="750.3" y2="403.3" stroke="#ff1a3a" stroke-width="0.9" />
<line x1="775.8" y1="367.4" x2="774.3" y2="394.2" stroke="#ff1a3a" stroke-width="0.9" />
<line x1="778.8" y1="367.4" x2="774.3" y2="394.2" stroke="#ff1a3a" stroke-width="0.9" />
<circle cx="774.3" cy="393.7" r="1.2" fill="#8a30d0" opacity="0.8"/>
<line x1="793.1" y1="361.8" x2="792.1" y2="387.8" stroke="#ff1a3a" stroke-width="0.9" />
<line x1="811.1" y1="356.2" x2="809.6" y2="381.1" stroke="#ff1a3a" stroke-width="0.9" />
<line x1="814.1" y1="356.2" x2="809.6" y2="381.1" stroke="#ff1a3a" stroke-width="0.9" />
<circle cx="809.6" cy="380.6" r="1.2" fill="#8a30d0" opacity="0.8"/>
<line x1="833.7" y1="352.1" x2="832.7" y2="372.2" stroke="#ff1a3a" stroke-width="0.9" />
<line x1="851.3" y1="347.1" x2="849.8" y2="365.7" stroke="#ff1a3a" stroke-width="0.9" />
<line x1="854.3" y1="347.1" x2="849.8" y2="365.7" stroke="#ff1a3a" stroke-width="0.9" />
<circle cx="849.8" cy="365.2" r="1.2" fill="#8a30d0" opacity="0.8"/>
<line x1="870.5" y1="341.3" x2="869.5" y2="358.5" stroke="#ff1a3a" stroke-width="0.9" />
<line x1="890.4" y1="335.7" x2="888.9" y2="352.0" stroke="#ff1a3a" stroke-width="0.9" />
<line x1="893.4" y1="335.7" x2="888.9" y2="352.0" stroke="#ff1a3a" stroke-width="0.9" />
<circle cx="888.9" cy="351.5" r="1.2" fill="#8a30d0" opacity="0.8"/>
<line x1="906.3" y1="331.0" x2="905.3" y2="346.7" stroke="#ff1a3a" stroke-width="0.9" />
<line x1="925.7" y1="325.6" x2="924.2" y2="340.8" stroke="#ff1a3a" stroke-width="0.9" />
<line x1="928.7" y1="325.6" x2="924.2" y2="340.8" stroke="#ff1a3a" stroke-width="0.9" />
<circle cx="924.2" cy="340.3" r="1.2" fill="#8a30d0" opacity="0.8"/>
<line x1="941.3" y1="321.1" x2="940.3" y2="336.1" stroke="#ff1a3a" stroke-width="0.9" />
<line x1="957.6" y1="316.6" x2="956.1" y2="331.7" stroke="#ff1a3a" stroke-width="0.9" />
<line x1="960.6" y1="316.6" x2="956.1" y2="331.7" stroke="#ff1a3a" stroke-width="0.9" />
<circle cx="956.1" cy="331.2" r="1.2" fill="#8a30d0" opacity="0.8"/>
<line x1="972.7" y1="312.3" x2="971.7" y2="327.5" stroke="#ff1a3a" stroke-width="0.9" />
<line x1="993.8" y1="306.6" x2="992.3" y2="322.0" stroke="#ff1a3a" stroke-width="0.9" />
<line x1="996.8" y1="306.6" x2="992.3" y2="322.0" stroke="#ff1a3a" stroke-width="0.9" />
<circle cx="992.3" cy="321.5" r="1.2" fill="#8a30d0" opacity="0.8"/>
<line x1="1013.7" y1="301.1" x2="1012.7" y2="316.8" stroke="#ff1a3a" stroke-width="0.9" />
<line x1="1031.6" y1="296.3" x2="1030.1" y2="312.5" stroke="#ff1a3a" stroke-width="0.9" />
<line x1="1034.6" y1="296.3" x2="1030.1" y2="312.5" stroke="#ff1a3a" stroke-width="0.9" />
<circle cx="1030.1" cy="312.0" r="1.2" fill="#8a30d0" opacity="0.8"/>
<line x1="1045.9" y1="292.4" x2="1044.9" y2="309.0" stroke="#ff1a3a" stroke-width="0.9" />
<line x1="1061.1" y1="288.5" x2="1059.6" y2="305.6" stroke="#ff1a3a" stroke-width="0.9" />
<line x1="1064.1" y1="288.5" x2="1059.6" y2="305.6" stroke="#ff1a3a" stroke-width="0.9" />
<circle cx="1059.6" cy="305.1" r="1.2" fill="#8a30d0" opacity="0.8"/>
<line x1="1075.0" y1="284.7" x2="1074.0" y2="302.3" stroke="#ff1a3a" stroke-width="0.9" />
<line x1="1089.8" y1="281.0" x2="1088.3" y2="299.3" stroke="#ff1a3a" stroke-width="0.9" />
<line x1="1092.8" y1="281.0" x2="1088.3" y2="299.3" stroke="#ff1a3a" stroke-width="0.9" />
<circle cx="1088.3" cy="298.8" r="1.2" fill="#8a30d0" opacity="0.8"/>
<line x1="1103.4" y1="277.3" x2="1102.4" y2="296.8" stroke="#ff1a3a" stroke-width="0.9" />
<line x1="1117.9" y1="273.7" x2="1116.4" y2="294.5" stroke="#ff1a3a" stroke-width="0.9" />
<line x1="1120.9" y1="273.7" x2="1116.4" y2="294.5" stroke="#ff1a3a" stroke-width="0.9" />
<circle cx="1116.4" cy="294.0" r="1.2" fill="#8a30d0" opacity="0.8"/>
<line x1="1131.2" y1="270.2" x2="1130.2" y2="292.3" stroke="#ff1a3a" stroke-width="0.9" />
<line x1="1145.3" y1="266.7" x2="1143.8" y2="290.0" stroke="#ff1a3a" stroke-width="0.9" />
<line x1="1148.3" y1="266.7" x2="1143.8" y2="290.0" stroke="#ff1a3a" stroke-width="0.9" />
<circle cx="1143.8" cy="289.5" r="1.2" fill="#8a30d0" opacity="0.8"/>
<line x1="1160.5" y1="262.8" x2="1159.5" y2="287.3" stroke="#ff1a3a" stroke-width="0.9" />
<line x1="1176.5" y1="258.9" x2="1175.0" y2="284.4" stroke="#ff1a3a" stroke-width="0.9" />
<line x1="1179.5" y1="258.9" x2="1175.0" y2="284.4" stroke="#ff1a3a" stroke-width="0.9" />
<circle cx="1175.0" cy="283.9" r="1.2" fill="#8a30d0" opacity="0.8"/>
<line x1="1189.2" y1="255.7" x2="1188.2" y2="281.5" stroke="#ff1a3a" stroke-width="0.9" />
<line x1="1206.9" y1="251.4" x2="1205.4" y2="275.5" stroke="#ff1a3a" stroke-width="0.9" />
<line x1="1209.9" y1="251.4" x2="1205.4" y2="275.5" stroke="#ff1a3a" stroke-width="0.9" />
<circle cx="1205.4" cy="275.0" r="1.2" fill="#8a30d0" opacity="0.8"/>
<line x1="1223.5" y1="247.3" x2="1222.5" y2="268.7" stroke="#ff1a3a" stroke-width="0.9" />
<line x1="1240.7" y1="243.3" x2="1239.2" y2="262.9" stroke="#ff1a3a" stroke-width="0.9" />
<line x1="1243.7" y1="243.3" x2="1239.2" y2="262.9" stroke="#ff1a3a" stroke-width="0.9" />
<circle cx="1239.2" cy="262.4" r="1.2" fill="#8a30d0" opacity="0.8"/>
<line x1="1252.6" y1="240.3" x2="1251.6" y2="259.0" stroke="#ff1a3a" stroke-width="0.9" />
<line x1="1265.3" y1="237.4" x2="1263.8" y2="255.4" stroke="#ff1a3a" stroke-width="0.9" />
<line x1="1268.3" y1="237.4" x2="1263.8" y2="255.4" stroke="#ff1a3a" stroke-width="0.9" />
<circle cx="1263.8" cy="254.9" r="1.2" fill="#8a30d0" opacity="0.8"/>
<polygon points="229.0,595.9 244.7,589.2 262.3,581.8 279.0,575.0 293.6,569.2 307.7,563.7 322.7,558.0 340.0,551.6 360.5,544.1 383.2,536.0 406.8,527.6 430.0,519.5 453.8,511.3 478.4,502.9 501.3,495.2 520.0,489.0 532.7,484.8 541.2,482.0 548.1,480.0 556.0,477.8 566.1,475.4 576.9,473.2 587.0,471.2 595.0,469.4 599.8,468.0 602.3,466.9 604.5,465.7 608.4,463.9 614.1,461.4 620.8,458.5 628.6,455.1 638.0,451.0 649.3,446.1 662.3,440.4 676.1,434.3 690.0,428.0 704.2,421.2 719.1,413.9 733.6,406.8 746.9,400.7 758.5,396.0 769.0,392.1 778.9,388.6 789.0,385.0 799.4,381.1 809.7,377.1 819.8,373.2 829.7,369.4 839.3,365.8 848.5,362.2 857.7,358.8 867.0,355.4 876.4,352.1 885.9,349.0 895.4,345.9 904.7,342.9 913.8,340.0 922.9,337.3 931.8,334.6 940.6,332.0 949.5,329.5 958.5,327.0 967.1,324.7 975.0,322.6 981.4,320.9 986.8,319.4 992.6,317.9 1000.0,316.0 1009.8,313.5 1021.2,310.7 1033.3,307.8 1045.0,305.0 1055.9,302.4 1066.6,299.9 1077.7,297.5 1090.0,295.0 1104.4,292.5 1120.3,289.9 1136.1,287.4 1150.0,285.0 1161.7,282.9 1171.9,281.1 1181.2,279.2 1190.0,277.0 1198.1,274.4 1205.4,271.6 1212.2,268.7 1219.0,266.0 1225.7,263.6 1232.1,261.3 1238.5,259.1 1245.0,257.0 1252.3,254.7 1260.1,252.4 1267.1,250.4 1272.0,249.0 1272.0,240.0 1267.1,241.4 1260.1,243.4 1252.3,245.7 1245.0,248.0 1238.5,250.1 1232.1,252.3 1225.7,254.6 1219.0,257.0 1212.2,259.7 1205.4,262.6 1198.1,265.4 1190.0,268.0 1181.2,270.2 1171.9,272.1 1161.7,273.9 1150.0,276.0 1136.1,278.4 1120.3,280.9 1104.4,283.5 1090.0,286.0 1077.7,288.5 1066.6,290.9 1055.9,293.4 1045.0,296.0 1033.3,298.8 1021.2,301.7 1009.8,304.5 1000.0,307.0 992.6,308.9 986.8,310.4 981.4,311.9 975.0,313.6 967.1,315.7 958.5,318.0 949.5,320.5 940.6,323.0 931.8,325.6 922.9,328.3 913.8,331.0 904.7,333.9 895.4,336.9 885.9,340.0 876.4,343.1 867.0,346.4 857.7,349.8 848.5,353.2 839.3,356.8 829.7,360.4 819.8,364.2 809.7,368.1 799.4,372.1 789.0,376.0 778.9,379.6 769.0,383.1 758.5,387.0 746.9,391.7 733.6,397.8 719.1,404.9 704.2,412.2 690.0,419.0 676.1,425.3 662.3,431.4 649.3,437.1 638.0,442.0 628.6,446.1 620.8,449.5 614.1,452.4 608.4,454.9 604.5,456.7 602.3,457.9 599.8,459.0 595.0,460.4 587.0,462.2 576.9,464.2 566.1,466.4 556.0,468.8 548.1,471.0 541.2,473.0 532.7,475.8 520.0,480.0 501.3,486.2 478.4,493.9 453.8,502.3 430.0,510.5 406.8,518.6 383.2,527.0 360.5,535.1 340.0,542.6 322.7,549.0 307.7,554.7 293.6,560.2 279.0,566.0 262.3,572.8 244.7,580.2 229.0,586.9" fill="#d83a58" stroke="none" stroke-width="1" opacity="0.18"/>
<polygon points="278.0,549.1 286.0,549.1 302.0,564.3 294.0,565.6" fill="#c83050" stroke="none" stroke-width="1" opacity="0.10"/>
<polygon points="348.0,522.0 356.0,522.0 372.0,538.0 364.0,539.4" fill="#c83050" stroke="none" stroke-width="1" opacity="0.10"/>
<polygon points="418.0,495.0 426.0,495.0 442.0,512.7 434.0,514.2" fill="#c83050" stroke="none" stroke-width="1" opacity="0.10"/>
<polygon points="488.0,459.5 496.0,459.5 512.0,485.5 504.0,487.7" fill="#c83050" stroke="none" stroke-width="1" opacity="0.10"/>
<polygon points="558.0,435.9 566.0,435.9 582.0,464.6 574.0,467.0" fill="#c83050" stroke="none" stroke-width="1" opacity="0.10"/>
<polygon points="628.0,413.1 636.0,413.1 652.0,439.0 644.0,441.1" fill="#c83050" stroke="none" stroke-width="1" opacity="0.10"/>
<polygon points="698.0,389.5 706.0,389.5 722.0,409.2 714.0,410.9" fill="#c83050" stroke="none" stroke-width="1" opacity="0.10"/>
<polygon points="768.0,366.3 776.0,366.3 792.0,382.1 784.0,383.4" fill="#c83050" stroke="none" stroke-width="1" opacity="0.10"/>
<polygon points="838.0,346.7 846.0,346.7 862.0,357.5 854.0,358.4" fill="#c83050" stroke="none" stroke-width="1" opacity="0.10"/>
<polygon points="908.0,326.2 916.0,326.2 932.0,335.3 924.0,336.1" fill="#c83050" stroke="none" stroke-width="1" opacity="0.10"/>
<polygon points="978.0,306.8 986.0,306.8 1002.0,316.1 994.0,316.9" fill="#c83050" stroke="none" stroke-width="1" opacity="0.10"/>
<polygon points="1048.0,288.4 1056.0,288.4 1072.0,298.8 1064.0,299.7" fill="#c83050" stroke="none" stroke-width="1" opacity="0.10"/>
<polygon points="1118.0,271.1 1126.0,271.1 1142.0,284.9 1134.0,286.1" fill="#c83050" stroke="none" stroke-width="1" opacity="0.10"/>
<polygon points="1188.0,253.8 1196.0,253.8 1212.0,267.8 1204.0,269.0" fill="#c83050" stroke="none" stroke-width="1" opacity="0.10"/>
<polyline points="218.0,604.5 229.0,599.9 244.7,593.2 262.3,585.8 279.0,579.0 293.6,573.2 307.7,567.7 322.7,562.0 340.0,555.6 360.5,548.1 383.2,540.0 406.8,531.6 430.0,523.5 453.8,515.3 478.4,506.9 501.3,499.2 520.0,493.0 532.7,488.8 541.2,486.0 548.1,484.0 556.0,481.8 566.1,479.4 576.9,477.2 587.0,475.2 595.0,473.4 599.8,472.0 602.3,470.9 604.5,469.7 608.4,467.9 614.1,465.4 620.8,462.5 628.6,459.1 638.0,455.0 649.3,450.1 662.3,444.4 676.1,438.3 690.0,432.0 704.2,425.2 719.1,417.9 733.6,410.8 746.9,404.7 758.5,400.0 769.0,396.1 778.9,392.6 789.0,389.0 799.4,385.1 809.7,381.1 819.8,377.2 829.7,373.4 839.3,369.8 848.5,366.2 857.7,362.8 867.0,359.4 876.4,356.1 885.9,353.0 895.4,349.9 904.7,346.9 913.8,344.0 922.9,341.3 931.8,338.6 940.6,336.0 949.5,333.5 958.5,331.0 967.1,328.7 975.0,326.6 981.4,324.9 986.8,323.4 992.6,321.9 1000.0,320.0 1009.8,317.5 1021.2,314.7 1033.3,311.8 1045.0,309.0 1055.9,306.4 1066.6,303.9 1077.7,301.5 1090.0,299.0 1104.4,296.5 1120.3,293.9 1136.1,291.4 1150.0,289.0 1161.7,286.9 1171.9,285.1 1181.2,283.2 1190.0,281.0 1198.1,278.4 1205.4,275.6 1212.2,272.7 1219.0,270.0 1225.7,267.6 1232.1,265.3 1238.5,263.1 1245.0,261.0 1252.3,258.7 1260.1,256.4 1267.1,254.4 1272.0,253.0" fill="none" stroke="#ff0000" stroke-width="1.8" />
<line x1="372.0" y1="447.0" x2="371.2" y2="477.6" stroke="#ff1a3a" stroke-width="0.9" />
<line x1="388.0" y1="442.2" x2="387.2" y2="471.8" stroke="#ff1a3a" stroke-width="0.9" />
<line x1="408.0" y1="436.4" x2="407.2" y2="464.6" stroke="#ff1a3a" stroke-width="0.9" />
<line x1="424.0" y1="431.7" x2="423.2" y2="458.8" stroke="#ff1a3a" stroke-width="0.9" />
<line x1="440.0" y1="427.0" x2="439.2" y2="453.0" stroke="#ff1a3a" stroke-width="0.9" />
<line x1="460.0" y1="421.2" x2="459.2" y2="445.8" stroke="#ff1a3a" stroke-width="0.9" />
<line x1="480.0" y1="415.4" x2="479.2" y2="438.5" stroke="#ff1a3a" stroke-width="0.9" />
<line x1="491.0" y1="412.2" x2="490.2" y2="434.6" stroke="#ff1a3a" stroke-width="0.9" />
<line x1="502.0" y1="408.9" x2="501.2" y2="430.7" stroke="#ff1a3a" stroke-width="0.9" />
<line x1="522.0" y1="402.8" x2="521.2" y2="424.3" stroke="#ff1a3a" stroke-width="0.9" />
<line x1="538.0" y1="398.0" x2="537.2" y2="419.3" stroke="#ff1a3a" stroke-width="0.9" />
<line x1="558.0" y1="391.9" x2="557.2" y2="413.0" stroke="#ff1a3a" stroke-width="0.9" />
<line x1="569.0" y1="388.6" x2="568.2" y2="409.5" stroke="#ff1a3a" stroke-width="0.9" />
<line x1="578.0" y1="385.9" x2="577.2" y2="406.6" stroke="#ff1a3a" stroke-width="0.9" />
<line x1="594.0" y1="381.2" x2="593.2" y2="401.3" stroke="#ff1a3a" stroke-width="0.9" />
<line x1="607.0" y1="377.3" x2="606.2" y2="396.9" stroke="#ff1a3a" stroke-width="0.9" />
<line x1="618.0" y1="374.1" x2="617.2" y2="393.2" stroke="#ff1a3a" stroke-width="0.9" />
<line x1="627.0" y1="371.4" x2="626.2" y2="390.1" stroke="#ff1a3a" stroke-width="0.9" />
<line x1="647.0" y1="365.5" x2="646.2" y2="383.4" stroke="#ff1a3a" stroke-width="0.9" />
<line x1="656.0" y1="362.9" x2="655.2" y2="380.4" stroke="#ff1a3a" stroke-width="0.9" />
<line x1="676.0" y1="357.6" x2="675.2" y2="374.5" stroke="#ff1a3a" stroke-width="0.9" />
<line x1="692.0" y1="353.5" x2="691.2" y2="370.0" stroke="#ff1a3a" stroke-width="0.9" />
<line x1="708.0" y1="349.4" x2="707.2" y2="365.5" stroke="#ff1a3a" stroke-width="0.9" />
<line x1="728.0" y1="344.3" x2="727.2" y2="359.9" stroke="#ff1a3a" stroke-width="0.9" />
<line x1="739.0" y1="341.5" x2="738.2" y2="356.8" stroke="#ff1a3a" stroke-width="0.9" />
<line x1="759.0" y1="336.4" x2="758.2" y2="351.1" stroke="#ff1a3a" stroke-width="0.9" />
<line x1="768.0" y1="334.1" x2="767.2" y2="348.6" stroke="#ff1a3a" stroke-width="0.9" />
<line x1="788.0" y1="329.0" x2="787.2" y2="343.0" stroke="#ff1a3a" stroke-width="0.9" />
<line x1="797.0" y1="326.7" x2="796.2" y2="340.4" stroke="#ff1a3a" stroke-width="0.9" />
<line x1="470.0" y1="448.2" x2="470.0" y2="460.0" stroke="#ff1a3a" stroke-width="0.8" />
<line x1="480.0" y1="444.5" x2="480.0" y2="456.5" stroke="#ff1a3a" stroke-width="0.8" />
<line x1="490.0" y1="440.9" x2="490.0" y2="453.0" stroke="#ff1a3a" stroke-width="0.8" />
<line x1="500.0" y1="437.3" x2="500.0" y2="449.5" stroke="#ff1a3a" stroke-width="0.8" />
<line x1="518.0" y1="431.6" x2="518.0" y2="443.3" stroke="#ff1a3a" stroke-width="0.8" />
<line x1="528.0" y1="428.4" x2="528.0" y2="439.8" stroke="#ff1a3a" stroke-width="0.8" />
<line x1="542.0" y1="424.0" x2="542.0" y2="434.9" stroke="#ff1a3a" stroke-width="0.8" />
<line x1="556.0" y1="419.6" x2="556.0" y2="430.0" stroke="#ff1a3a" stroke-width="0.8" />
<line x1="570.0" y1="415.2" x2="570.0" y2="425.2" stroke="#ff1a3a" stroke-width="0.8" />
<line x1="588.0" y1="409.3" x2="588.0" y2="419.2" stroke="#ff1a3a" stroke-width="0.8" />
<line x1="598.0" y1="405.9" x2="598.0" y2="416.1" stroke="#ff1a3a" stroke-width="0.8" />
<line x1="616.0" y1="399.9" x2="616.0" y2="410.4" stroke="#ff1a3a" stroke-width="0.8" />
<line x1="626.0" y1="396.5" x2="626.0" y2="407.3" stroke="#ff1a3a" stroke-width="0.8" />
<line x1="644.0" y1="390.4" x2="644.0" y2="401.7" stroke="#ff1a3a" stroke-width="0.8" />
<line x1="658.0" y1="385.7" x2="658.0" y2="397.3" stroke="#ff1a3a" stroke-width="0.8" />
<line x1="672.0" y1="381.6" x2="672.0" y2="392.9" stroke="#ff1a3a" stroke-width="0.8" />
<line x1="682.0" y1="378.8" x2="682.0" y2="389.8" stroke="#ff1a3a" stroke-width="0.8" />
<line x1="700.0" y1="373.7" x2="700.0" y2="384.1" stroke="#ff1a3a" stroke-width="0.8" />
<line x1="710.0" y1="370.9" x2="710.0" y2="381.0" stroke="#ff1a3a" stroke-width="0.8" />
<line x1="724.0" y1="367.0" x2="724.0" y2="376.6" stroke="#ff1a3a" stroke-width="0.8" />
<line x1="742.0" y1="361.9" x2="742.0" y2="371.0" stroke="#ff1a3a" stroke-width="0.8" />
<line x1="756.0" y1="358.0" x2="756.0" y2="366.6" stroke="#ff1a3a" stroke-width="0.8" />
<line x1="770.0" y1="354.0" x2="770.0" y2="362.2" stroke="#ff1a3a" stroke-width="0.8" />
<line x1="788.0" y1="349.0" x2="788.0" y2="356.6" stroke="#ff1a3a" stroke-width="0.8" />
<line x1="798.0" y1="346.2" x2="798.0" y2="353.5" stroke="#ff1a3a" stroke-width="0.8" />
<line x1="816.0" y1="341.1" x2="816.0" y2="347.8" stroke="#ff1a3a" stroke-width="0.8" />
<polyline points="368.0,452.0 490.0,413.6 580.0,384.7 660.0,360.8 750.0,338.0" fill="none" stroke="#9a8088" stroke-width="1" />
<line x1="310.0" y1="450.6" x2="311.0" y2="461.0" stroke="#1414ff" stroke-width="2.6" />
<line x1="310.0" y1="450.6" x2="338.6" y2="452.2" stroke="#1414ff" stroke-width="3.4" />
<line x1="338.6" y1="452.2" x2="365.0" y2="433.5" stroke="#1414ff" stroke-width="3.4" />
<line x1="310.0" y1="450.6" x2="338.6" y2="452.2" stroke="#8a8af0" stroke-width="0.9" />
<line x1="338.6" y1="452.2" x2="365.0" y2="433.5" stroke="#8a8af0" stroke-width="0.9" />
<line x1="365.0" y1="433.5" x2="366.0" y2="444.1" stroke="#1414ff" stroke-width="2.6" />
<line x1="365.0" y1="433.5" x2="397.2" y2="434.5" stroke="#1414ff" stroke-width="3.4" />
<line x1="397.2" y1="434.5" x2="427.0" y2="414.4" stroke="#1414ff" stroke-width="3.4" />
<line x1="365.0" y1="433.5" x2="397.2" y2="434.5" stroke="#8a8af0" stroke-width="0.9" />
<line x1="397.2" y1="434.5" x2="427.0" y2="414.4" stroke="#8a8af0" stroke-width="0.9" />
<line x1="427.0" y1="414.4" x2="428.0" y2="425.8" stroke="#1414ff" stroke-width="2.6" />
<line x1="427.0" y1="414.4" x2="455.6" y2="417.5" stroke="#1414ff" stroke-width="3.4" />
<line x1="455.6" y1="417.5" x2="482.0" y2="397.3" stroke="#1414ff" stroke-width="3.4" />
<line x1="427.0" y1="414.4" x2="455.6" y2="417.5" stroke="#8a8af0" stroke-width="0.9" />
<line x1="455.6" y1="417.5" x2="482.0" y2="397.3" stroke="#8a8af0" stroke-width="0.9" />
<line x1="482.0" y1="397.3" x2="483.0" y2="409.8" stroke="#1414ff" stroke-width="2.6" />
<line x1="482.0" y1="397.3" x2="510.9" y2="401.2" stroke="#1414ff" stroke-width="3.4" />
<line x1="510.9" y1="401.2" x2="537.5" y2="380.2" stroke="#1414ff" stroke-width="3.4" />
<line x1="482.0" y1="397.3" x2="510.9" y2="401.2" stroke="#8a8af0" stroke-width="0.9" />
<line x1="510.9" y1="401.2" x2="537.5" y2="380.2" stroke="#8a8af0" stroke-width="0.9" />
<line x1="537.5" y1="380.2" x2="538.5" y2="393.1" stroke="#1414ff" stroke-width="2.6" />
<line x1="537.5" y1="380.2" x2="563.8" y2="385.2" stroke="#1414ff" stroke-width="3.4" />
<line x1="563.8" y1="385.2" x2="588.0" y2="364.8" stroke="#1414ff" stroke-width="3.4" />
<line x1="537.5" y1="380.2" x2="563.8" y2="385.2" stroke="#8a8af0" stroke-width="0.9" />
<line x1="563.8" y1="385.2" x2="588.0" y2="364.8" stroke="#8a8af0" stroke-width="0.9" />
<line x1="588.0" y1="364.8" x2="589.0" y2="377.9" stroke="#1414ff" stroke-width="2.6" />
<line x1="588.0" y1="364.8" x2="613.0" y2="370.6" stroke="#1414ff" stroke-width="3.4" />
<line x1="613.0" y1="370.6" x2="636.0" y2="351.6" stroke="#1414ff" stroke-width="3.4" />
<line x1="588.0" y1="364.8" x2="613.0" y2="370.6" stroke="#8a8af0" stroke-width="0.9" />
<line x1="613.0" y1="370.6" x2="636.0" y2="351.6" stroke="#8a8af0" stroke-width="0.9" />
<line x1="636.0" y1="351.6" x2="637.0" y2="363.8" stroke="#1414ff" stroke-width="2.6" />
<line x1="636.0" y1="351.6" x2="659.4" y2="356.9" stroke="#1414ff" stroke-width="3.4" />
<line x1="659.4" y1="356.9" x2="681.0" y2="338.5" stroke="#1414ff" stroke-width="3.4" />
<line x1="636.0" y1="351.6" x2="659.4" y2="356.9" stroke="#8a8af0" stroke-width="0.9" />
<line x1="659.4" y1="356.9" x2="681.0" y2="338.5" stroke="#8a8af0" stroke-width="0.9" />
<line x1="681.0" y1="338.5" x2="682.0" y2="351.3" stroke="#1414ff" stroke-width="2.6" />
<line x1="681.0" y1="338.5" x2="702.8" y2="345.8" stroke="#1414ff" stroke-width="3.4" />
<line x1="702.8" y1="345.8" x2="723.0" y2="325.6" stroke="#1414ff" stroke-width="3.4" />
<line x1="681.0" y1="338.5" x2="702.8" y2="345.8" stroke="#8a8af0" stroke-width="0.9" />
<line x1="702.8" y1="345.8" x2="723.0" y2="325.6" stroke="#8a8af0" stroke-width="0.9" />
<line x1="410.0" y1="466.9" x2="411.0" y2="483.8" stroke="#1414ff" stroke-width="2.6" />
<line x1="410.0" y1="466.9" x2="439.1" y2="473.7" stroke="#1414ff" stroke-width="3.4" />
<line x1="439.1" y1="473.7" x2="466.0" y2="446.6" stroke="#1414ff" stroke-width="3.4" />
<line x1="410.0" y1="466.9" x2="439.1" y2="473.7" stroke="#8a8af0" stroke-width="0.9" />
<line x1="439.1" y1="473.7" x2="466.0" y2="446.6" stroke="#8a8af0" stroke-width="0.9" />
<line x1="466.0" y1="446.6" x2="467.0" y2="464.3" stroke="#1414ff" stroke-width="2.6" />
<line x1="466.0" y1="446.6" x2="496.2" y2="453.9" stroke="#1414ff" stroke-width="3.4" />
<line x1="496.2" y1="453.9" x2="524.0" y2="426.7" stroke="#1414ff" stroke-width="3.4" />
<line x1="466.0" y1="446.6" x2="496.2" y2="453.9" stroke="#8a8af0" stroke-width="0.9" />
<line x1="496.2" y1="453.9" x2="524.0" y2="426.7" stroke="#8a8af0" stroke-width="0.9" />
<line x1="524.0" y1="426.7" x2="525.0" y2="444.2" stroke="#1414ff" stroke-width="2.6" />
<line x1="524.0" y1="426.7" x2="552.1" y2="434.4" stroke="#1414ff" stroke-width="3.4" />
<line x1="552.1" y1="434.4" x2="578.0" y2="409.6" stroke="#1414ff" stroke-width="3.4" />
<line x1="524.0" y1="426.7" x2="552.1" y2="434.4" stroke="#8a8af0" stroke-width="0.9" />
<line x1="552.1" y1="434.4" x2="578.0" y2="409.6" stroke="#8a8af0" stroke-width="0.9" />
<line x1="578.0" y1="409.6" x2="579.0" y2="425.4" stroke="#1414ff" stroke-width="2.6" />
<line x1="578.0" y1="409.6" x2="605.0" y2="416.9" stroke="#1414ff" stroke-width="3.4" />
<line x1="605.0" y1="416.9" x2="630.0" y2="392.1" stroke="#1414ff" stroke-width="3.4" />
<line x1="578.0" y1="409.6" x2="605.0" y2="416.9" stroke="#8a8af0" stroke-width="0.9" />
<line x1="605.0" y1="416.9" x2="630.0" y2="392.1" stroke="#8a8af0" stroke-width="0.9" />
<line x1="630.0" y1="392.1" x2="631.0" y2="409.0" stroke="#1414ff" stroke-width="2.6" />
<line x1="630.0" y1="392.1" x2="654.4" y2="401.4" stroke="#1414ff" stroke-width="3.4" />
<line x1="654.4" y1="401.4" x2="677.0" y2="377.2" stroke="#1414ff" stroke-width="3.4" />
<line x1="630.0" y1="392.1" x2="654.4" y2="401.4" stroke="#8a8af0" stroke-width="0.9" />
<line x1="654.4" y1="401.4" x2="677.0" y2="377.2" stroke="#8a8af0" stroke-width="0.9" />
<line x1="677.0" y1="377.2" x2="678.0" y2="394.3" stroke="#1414ff" stroke-width="2.6" />
<line x1="677.0" y1="377.2" x2="700.9" y2="386.8" stroke="#1414ff" stroke-width="3.4" />
<line x1="700.9" y1="386.8" x2="723.0" y2="364.3" stroke="#1414ff" stroke-width="3.4" />
<line x1="677.0" y1="377.2" x2="700.9" y2="386.8" stroke="#8a8af0" stroke-width="0.9" />
<line x1="700.9" y1="386.8" x2="723.0" y2="364.3" stroke="#8a8af0" stroke-width="0.9" />
<line x1="723.0" y1="364.3" x2="724.0" y2="379.9" stroke="#1414ff" stroke-width="2.6" />
<line x1="723.0" y1="364.3" x2="744.8" y2="373.1" stroke="#1414ff" stroke-width="3.4" />
<line x1="744.8" y1="373.1" x2="765.0" y2="352.4" stroke="#1414ff" stroke-width="3.4" />
<line x1="723.0" y1="364.3" x2="744.8" y2="373.1" stroke="#8a8af0" stroke-width="0.9" />
<line x1="744.8" y1="373.1" x2="765.0" y2="352.4" stroke="#8a8af0" stroke-width="0.9" />
<line x1="765.0" y1="352.4" x2="766.0" y2="366.8" stroke="#1414ff" stroke-width="2.6" />
<line x1="765.0" y1="352.4" x2="778.0" y2="362.7" stroke="#1414ff" stroke-width="3.4" />
<line x1="778.0" y1="362.7" x2="790.0" y2="345.4" stroke="#1414ff" stroke-width="3.4" />
<line x1="765.0" y1="352.4" x2="778.0" y2="362.7" stroke="#8a8af0" stroke-width="0.9" />
<line x1="778.0" y1="362.7" x2="790.0" y2="345.4" stroke="#8a8af0" stroke-width="0.9" />
<line x1="398.0" y1="438.3" x2="456.0" y2="450.2" stroke="#1414ff" stroke-width="3.6" />
<line x1="398.0" y1="438.3" x2="399.0" y2="471.9" stroke="#3c3cf4" stroke-width="3.4" />
<line x1="398.0" y1="438.3" x2="411.0" y2="465.5" stroke="#3232f8" stroke-width="3.4" />
<line x1="398.0" y1="438.3" x2="456.0" y2="450.2" stroke="#8080f0" stroke-width="1.1" />
<line x1="398.0" y1="438.3" x2="399.0" y2="471.9" stroke="#9090f0" stroke-width="1.1" />
<line x1="518.0" y1="403.0" x2="576.0" y2="410.3" stroke="#1414ff" stroke-width="3.6" />
<line x1="518.0" y1="403.0" x2="519.0" y2="429.3" stroke="#3c3cf4" stroke-width="3.4" />
<line x1="518.0" y1="403.0" x2="531.0" y2="423.5" stroke="#3232f8" stroke-width="3.4" />
<line x1="518.0" y1="403.0" x2="576.0" y2="410.3" stroke="#8080f0" stroke-width="1.1" />
<line x1="518.0" y1="403.0" x2="519.0" y2="429.3" stroke="#9090f0" stroke-width="1.1" />
<line x1="708.0" y1="348.4" x2="766.0" y2="352.2" stroke="#1414ff" stroke-width="3.6" />
<line x1="708.0" y1="348.4" x2="709.0" y2="369.2" stroke="#3c3cf4" stroke-width="3.4" />
<line x1="708.0" y1="348.4" x2="721.0" y2="363.8" stroke="#3232f8" stroke-width="3.4" />
<line x1="708.0" y1="348.4" x2="766.0" y2="352.2" stroke="#8080f0" stroke-width="1.1" />
<line x1="708.0" y1="348.4" x2="709.0" y2="369.2" stroke="#9090f0" stroke-width="1.1" />
<polyline points="328.0,445.1 580.0,367.1 660.0,345.1 712.0,329.1" fill="none" stroke="#1414ff" stroke-width="6.2" stroke-linejoin="round" stroke-linecap="butt"/>
<polyline points="328.0,445.1 580.0,367.1 660.0,345.1 712.0,329.1" fill="none" stroke="#7e7eb8" stroke-width="2.4800000000000004" />
<polyline points="349.0,449.2 380.0,439.8 490.0,407.8 580.0,380.6 660.0,356.9 741.0,336.2" fill="none" stroke="#1414ff" stroke-width="6.5" stroke-linejoin="round" stroke-linecap="butt"/>
<polyline points="349.0,449.2 380.0,439.8 490.0,407.8 580.0,380.6 660.0,356.9 741.0,336.2" fill="none" stroke="#7e7eb8" stroke-width="2.6" />
<polyline points="429.0,460.1 500.0,434.4 580.0,409.1 660.0,382.1 795.0,344.1" fill="none" stroke="#1414ff" stroke-width="6.2" stroke-linejoin="round" stroke-linecap="butt"/>
<polyline points="429.0,460.1 500.0,434.4 580.0,409.1 660.0,382.1 795.0,344.1" fill="none" stroke="#7e7eb8" stroke-width="2.4800000000000004" />
<polyline points="467.0,464.2 580.0,424.9 825.0,348.2" fill="none" stroke="#1414ff" stroke-width="6.5" stroke-linejoin="round" stroke-linecap="butt"/>
<polyline points="467.0,464.2 580.0,424.9 825.0,348.2" fill="none" stroke="#7e7eb8" stroke-width="2.6" />
<polygon points="55.0,534.0 97.0,541.0 97.0,583.0 70.0,581.0" fill="#ff4a66" stroke="#ff0000" stroke-width="1.2" />
<polygon points="175.0,556.0 218.0,561.0 218.0,604.0 188.0,598.0" fill="#ff4a66" stroke="#ff0000" stroke-width="1.2" />
<line x1="76.0" y1="537.0" x2="83.0" y2="582.0" stroke="#ff0000" stroke-width="0.8" />
<line x1="196.0" y1="558.0" x2="201.0" y2="600.0" stroke="#ff0000" stroke-width="0.8" />
<line x1="107.0" y1="583.0" x2="172.0" y2="556.5" stroke="#ff0000" stroke-width="1.3" />
<line x1="55.0" y1="534.0" x2="97.0" y2="541.0" stroke="#1414ff" stroke-width="4.4" stroke-linecap="round"/>
<line x1="55.0" y1="534.0" x2="97.0" y2="541.0" stroke="#8c8cf0" stroke-width="1.4" />
<line x1="97.0" y1="541.0" x2="175.0" y2="556.0" stroke="#1414ff" stroke-width="4.4" stroke-linecap="round"/>
<line x1="97.0" y1="541.0" x2="175.0" y2="556.0" stroke="#8c8cf0" stroke-width="1.4" />
<line x1="175.0" y1="556.0" x2="219.0" y2="561.0" stroke="#1414ff" stroke-width="4.4" stroke-linecap="round"/>
<line x1="175.0" y1="556.0" x2="219.0" y2="561.0" stroke="#8c8cf0" stroke-width="1.4" />
<line x1="97.0" y1="542.0" x2="97.0" y2="582.0" stroke="#1414ff" stroke-width="4.4" stroke-linecap="round"/>
<line x1="97.0" y1="542.0" x2="97.0" y2="582.0" stroke="#8c8cf0" stroke-width="1.4" />
<line x1="175.0" y1="556.0" x2="186.0" y2="597.0" stroke="#1414ff" stroke-width="4.4" stroke-linecap="round"/>
<line x1="175.0" y1="556.0" x2="186.0" y2="597.0" stroke="#8c8cf0" stroke-width="1.4" />
<line x1="96.0" y1="582.0" x2="186.0" y2="597.0" stroke="#1414ff" stroke-width="4.4" stroke-linecap="round"/>
<line x1="96.0" y1="582.0" x2="186.0" y2="597.0" stroke="#8c8cf0" stroke-width="1.4" />
<line x1="100.0" y1="544.0" x2="141.0" y2="590.0" stroke="#1414ff" stroke-width="4.4" stroke-linecap="round"/>
<line x1="100.0" y1="544.0" x2="141.0" y2="590.0" stroke="#8c8cf0" stroke-width="1.4" />
<line x1="141.0" y1="590.0" x2="175.0" y2="557.0" stroke="#1414ff" stroke-width="4.4" stroke-linecap="round"/>
<line x1="141.0" y1="590.0" x2="175.0" y2="557.0" stroke="#8c8cf0" stroke-width="1.4" />
<polygon points="19.0,518.0 277.0,436.0 489.0,465.0 489.0,471.5 261.0,560.5 20.0,528.0" fill="#9c4566" stroke="none" stroke-width="1" />
<polygon points="33.5,515.3 67.0,504.7 86.9,507.6 53.8,518.3" fill="#a75674" stroke="none" stroke-width="1" opacity="0.75"/>
<polygon points="90.2,497.3 123.6,486.6 143.0,489.4 109.9,500.1" fill="#a75674" stroke="none" stroke-width="1" opacity="0.75"/>
<polygon points="146.8,479.2 180.3,468.5 199.1,471.2 165.9,482.0" fill="#a75674" stroke="none" stroke-width="1" opacity="0.75"/>
<polygon points="203.4,461.1 236.9,450.5 255.2,453.0 222.0,463.8" fill="#a75674" stroke="none" stroke-width="1" opacity="0.75"/>
<polygon points="260.1,443.1 280.7,436.5 298.5,438.9 278.1,445.6" fill="#a75674" stroke="none" stroke-width="1" opacity="0.75"/>
<polygon points="56.8,523.6 72.0,518.6 85.3,520.6 70.2,525.6" fill="#a75674" stroke="none" stroke-width="1" opacity="0.75"/>
<polygon points="94.8,511.2 127.8,500.4 140.6,502.2 107.9,513.1" fill="#a75674" stroke="none" stroke-width="1" opacity="0.75"/>
<polygon points="150.6,492.9 183.5,482.1 196.0,483.9 163.3,494.7" fill="#a75674" stroke="none" stroke-width="1" opacity="0.75"/>
<polygon points="206.3,474.6 239.2,463.8 251.4,465.5 218.7,476.4" fill="#a75674" stroke="none" stroke-width="1" opacity="0.75"/>
<polygon points="262.0,456.3 295.0,445.5 306.7,447.1 274.0,458.0" fill="#a75674" stroke="none" stroke-width="1" opacity="0.75"/>
<polygon points="93.7,524.3 126.2,513.4 134.7,514.6 102.4,525.6" fill="#a75674" stroke="none" stroke-width="1" opacity="0.75"/>
<polygon points="148.7,505.8 181.2,494.9 189.5,496.1 157.1,507.1" fill="#a75674" stroke="none" stroke-width="1" opacity="0.75"/>
<polygon points="203.7,487.4 236.2,476.5 244.3,477.6 211.9,488.5" fill="#a75674" stroke="none" stroke-width="1" opacity="0.75"/>
<polygon points="258.7,468.9 291.2,458.0 299.0,459.1 266.7,470.0" fill="#a75674" stroke="none" stroke-width="1" opacity="0.75"/>
<polygon points="313.7,450.5 333.7,443.8 341.3,444.8 321.4,451.5" fill="#a75674" stroke="none" stroke-width="1" opacity="0.75"/>
<polygon points="101.6,530.3 116.5,525.2 138.9,528.5 124.2,533.6" fill="#a75674" stroke="none" stroke-width="1" opacity="0.75"/>
<polygon points="138.8,517.6 171.0,506.7 192.8,509.8 160.9,520.9" fill="#a75674" stroke="none" stroke-width="1" opacity="0.75"/>
<polygon points="193.3,499.1 225.5,488.1 246.7,491.1 214.8,502.2" fill="#a75674" stroke="none" stroke-width="1" opacity="0.75"/>
<polygon points="247.8,480.5 280.0,469.5 300.6,472.4 268.7,483.5" fill="#a75674" stroke="none" stroke-width="1" opacity="0.75"/>
<polygon points="302.3,461.9 334.5,451.0 354.5,453.7 322.6,464.8" fill="#a75674" stroke="none" stroke-width="1" opacity="0.75"/>
<polygon points="150.4,532.7 182.0,521.6 204.8,524.9 173.6,536.1" fill="#a75674" stroke="none" stroke-width="1" opacity="0.75"/>
<polygon points="203.9,513.9 235.4,502.8 257.6,506.0 226.4,517.2" fill="#a75674" stroke="none" stroke-width="1" opacity="0.75"/>
<polygon points="257.3,495.1 288.9,483.9 310.4,487.0 279.2,498.2" fill="#a75674" stroke="none" stroke-width="1" opacity="0.75"/>
<polygon points="310.7,476.2 342.3,465.1 363.2,468.0 332.0,479.2" fill="#a75674" stroke="none" stroke-width="1" opacity="0.75"/>
<polygon points="364.2,457.4 383.6,450.6 404.0,453.4 384.8,460.3" fill="#a75674" stroke="none" stroke-width="1" opacity="0.75"/>
<polygon points="178.4,541.7 192.7,536.5 204.2,538.2 189.9,543.4" fill="#a75674" stroke="none" stroke-width="1" opacity="0.75"/>
<polygon points="214.2,528.7 245.1,517.5 256.3,519.1 225.5,530.4" fill="#a75674" stroke="none" stroke-width="1" opacity="0.75"/>
<polygon points="266.6,509.7 297.6,498.4 308.4,500.0 277.6,511.3" fill="#a75674" stroke="none" stroke-width="1" opacity="0.75"/>
<polygon points="319.0,490.6 350.0,479.4 360.5,480.8 329.7,492.1" fill="#a75674" stroke="none" stroke-width="1" opacity="0.75"/>
<polygon points="371.4,471.6 402.4,460.3 412.5,461.7 381.8,473.0" fill="#a75674" stroke="none" stroke-width="1" opacity="0.75"/>
<polygon points="208.0,541.2 238.6,529.9 251.1,531.7 220.7,543.1" fill="#a75674" stroke="none" stroke-width="1" opacity="0.75"/>
<polygon points="259.8,522.0 290.5,510.7 302.6,512.5 272.2,523.8" fill="#a75674" stroke="none" stroke-width="1" opacity="0.75"/>
<polygon points="311.7,502.9 342.3,491.5 354.2,493.2 323.7,504.6" fill="#a75674" stroke="none" stroke-width="1" opacity="0.75"/>
<polygon points="363.6,483.7 394.2,472.3 405.7,473.9 375.2,485.3" fill="#a75674" stroke="none" stroke-width="1" opacity="0.75"/>
<polygon points="415.4,464.5 434.3,457.5 445.5,459.0 426.7,466.1" fill="#a75674" stroke="none" stroke-width="1" opacity="0.75"/>
<polygon points="223.1,548.4 237.1,543.1 261.9,546.8 248.1,552.1" fill="#a75674" stroke="none" stroke-width="1" opacity="0.75"/>
<polygon points="258.0,535.2 288.2,523.7 312.4,527.3 282.5,538.8" fill="#a75674" stroke="none" stroke-width="1" opacity="0.75"/>
<polygon points="309.2,515.8 339.4,504.4 362.9,507.8 333.0,519.3" fill="#a75674" stroke="none" stroke-width="1" opacity="0.75"/>
<polygon points="360.4,496.5 390.6,485.1 413.4,488.3 383.5,499.8" fill="#a75674" stroke="none" stroke-width="1" opacity="0.75"/>
<polygon points="411.6,477.2 441.8,465.7 463.9,468.8 434.1,480.3" fill="#a75674" stroke="none" stroke-width="1" opacity="0.75"/>
<line x1="54.1" y1="523.2" x2="307.7" y2="440.2" stroke="#ff0000" stroke-width="0.9" />
<line x1="77.1" y1="526.6" x2="327.9" y2="443.0" stroke="#ff0000" stroke-width="0.9" />
<line x1="81.9" y1="527.4" x2="332.1" y2="443.5" stroke="#ff0000" stroke-width="0.9" />
<line x1="96.9" y1="529.6" x2="345.3" y2="445.3" stroke="#ff0000" stroke-width="0.9" />
<line x1="135.9" y1="535.4" x2="379.4" y2="450.0" stroke="#ff0000" stroke-width="0.9" />
<line x1="176.1" y1="541.4" x2="414.6" y2="454.8" stroke="#ff0000" stroke-width="0.9" />
<line x1="195.9" y1="544.3" x2="432.0" y2="457.2" stroke="#ff0000" stroke-width="0.9" />
<line x1="217.9" y1="547.6" x2="451.3" y2="459.8" stroke="#ff0000" stroke-width="0.9" />
<line x1="75.8" y1="500.0" x2="109.9" y2="505.0" stroke="#ff0000" stroke-width="0.85" />
<line x1="132.5" y1="481.9" x2="165.7" y2="486.7" stroke="#ff0000" stroke-width="0.85" />
<line x1="189.3" y1="463.9" x2="221.5" y2="468.4" stroke="#ff0000" stroke-width="0.85" />
<line x1="246.0" y1="445.8" x2="277.3" y2="450.2" stroke="#ff0000" stroke-width="0.85" />
<line x1="82.0" y1="514.1" x2="104.7" y2="517.4" stroke="#ff0000" stroke-width="0.85" />
<line x1="137.8" y1="495.8" x2="159.8" y2="499.0" stroke="#ff0000" stroke-width="0.85" />
<line x1="193.6" y1="477.6" x2="215.0" y2="480.6" stroke="#ff0000" stroke-width="0.85" />
<line x1="249.4" y1="459.3" x2="270.2" y2="462.2" stroke="#ff0000" stroke-width="0.85" />
<line x1="305.2" y1="441.0" x2="325.4" y2="443.8" stroke="#ff0000" stroke-width="0.85" />
<line x1="137.0" y1="508.9" x2="151.6" y2="511.1" stroke="#ff0000" stroke-width="0.85" />
<line x1="192.0" y1="490.5" x2="206.2" y2="492.5" stroke="#ff0000" stroke-width="0.85" />
<line x1="247.1" y1="472.0" x2="260.8" y2="474.0" stroke="#ff0000" stroke-width="0.85" />
<line x1="302.1" y1="453.6" x2="315.5" y2="455.4" stroke="#ff0000" stroke-width="0.85" />
<line x1="124.2" y1="520.3" x2="162.7" y2="526.0" stroke="#ff0000" stroke-width="0.85" />
<line x1="178.9" y1="501.8" x2="216.2" y2="507.2" stroke="#ff0000" stroke-width="0.85" />
<line x1="233.5" y1="483.3" x2="269.8" y2="488.4" stroke="#ff0000" stroke-width="0.85" />
<line x1="288.1" y1="464.7" x2="323.4" y2="469.6" stroke="#ff0000" stroke-width="0.85" />
<line x1="342.8" y1="446.2" x2="377.0" y2="450.9" stroke="#ff0000" stroke-width="0.85" />
<line x1="189.5" y1="516.6" x2="228.5" y2="522.3" stroke="#ff0000" stroke-width="0.85" />
<line x1="243.0" y1="497.8" x2="281.0" y2="503.3" stroke="#ff0000" stroke-width="0.85" />
<line x1="296.6" y1="479.0" x2="333.5" y2="484.2" stroke="#ff0000" stroke-width="0.85" />
<line x1="350.2" y1="460.3" x2="386.0" y2="465.2" stroke="#ff0000" stroke-width="0.85" />
<line x1="202.3" y1="531.8" x2="221.9" y2="534.7" stroke="#ff0000" stroke-width="0.85" />
<line x1="254.8" y1="512.8" x2="273.8" y2="515.6" stroke="#ff0000" stroke-width="0.85" />
<line x1="307.2" y1="493.8" x2="325.7" y2="496.4" stroke="#ff0000" stroke-width="0.85" />
<line x1="359.7" y1="474.7" x2="377.7" y2="477.2" stroke="#ff0000" stroke-width="0.85" />
<line x1="412.2" y1="455.7" x2="429.6" y2="458.1" stroke="#ff0000" stroke-width="0.85" />
<line x1="247.8" y1="525.2" x2="269.3" y2="528.3" stroke="#ff0000" stroke-width="0.85" />
<line x1="299.8" y1="506.0" x2="320.6" y2="509.0" stroke="#ff0000" stroke-width="0.85" />
<line x1="351.7" y1="486.8" x2="371.9" y2="489.7" stroke="#ff0000" stroke-width="0.85" />
<line x1="403.6" y1="467.7" x2="423.3" y2="470.4" stroke="#ff0000" stroke-width="0.85" />
<line x1="243.6" y1="537.9" x2="286.1" y2="544.2" stroke="#ff0000" stroke-width="0.85" />
<line x1="294.9" y1="518.6" x2="336.2" y2="524.6" stroke="#ff0000" stroke-width="0.85" />
<line x1="346.3" y1="499.3" x2="386.4" y2="505.1" stroke="#ff0000" stroke-width="0.85" />
<line x1="397.6" y1="480.0" x2="436.6" y2="485.5" stroke="#ff0000" stroke-width="0.85" />
<line x1="448.9" y1="460.7" x2="486.7" y2="465.9" stroke="#ff0000" stroke-width="0.85" />
<polygon points="19.0,518.0 261.0,554.0 261.0,561.0 20.0,528.0" fill="#e8506e" stroke="none" stroke-width="1" />
<line x1="20.0" y1="523.0" x2="261.0" y2="558.0" stroke="#a08890" stroke-width="1.2" />
<polygon points="261.0,554.0 489.0,465.0 489.0,471.5 261.0,560.5" fill="#e85a72" stroke="none" stroke-width="1" />
<line x1="261.0" y1="557.3" x2="489.0" y2="468.3" stroke="#8e8e8e" stroke-width="2" />
<polygon points="19.0,518.0 277.0,436.0 489.0,465.0 261.0,554.0" fill="none" stroke="#ff0000" stroke-width="1.4" />
<polyline points="20.0,528.0 261.0,561.0 489.0,471.5 489.0,465.0" fill="none" stroke="#ff0000" stroke-width="1.3" />
<line x1="19.0" y1="518.0" x2="20.0" y2="528.0" stroke="#ff0000" stroke-width="1" />
<line x1="54.1" y1="523.2" x2="54.1" y2="532.2" stroke="#ff0000" stroke-width="0.8" />
<line x1="77.1" y1="526.6" x2="77.1" y2="535.6" stroke="#ff0000" stroke-width="0.8" />
<line x1="81.9" y1="527.4" x2="81.9" y2="536.4" stroke="#ff0000" stroke-width="0.8" />
<line x1="96.9" y1="529.6" x2="96.9" y2="538.6" stroke="#ff0000" stroke-width="0.8" />
<line x1="135.9" y1="535.4" x2="135.9" y2="544.4" stroke="#ff0000" stroke-width="0.8" />
<line x1="176.1" y1="541.4" x2="176.1" y2="550.4" stroke="#ff0000" stroke-width="0.8" />
<line x1="195.9" y1="544.3" x2="195.9" y2="553.3" stroke="#ff0000" stroke-width="0.8" />
<line x1="217.9" y1="547.6" x2="217.9" y2="556.6" stroke="#ff0000" stroke-width="0.8" />
<polygon points="683.0,320.0 697.7,316.0 712.5,312.1 727.2,308.2 741.9,304.3 756.6,300.5 771.4,296.7 786.1,293.0 800.8,289.3 815.5,285.7 830.3,282.1 845.0,278.5 859.7,275.0 874.4,271.5 889.2,268.1 903.9,264.7 918.6,261.3 933.3,258.0 948.1,254.8 962.8,251.5 977.5,248.4 992.2,245.2 1007.0,242.1 1021.7,239.1 1036.4,236.0 1051.1,233.1 1065.9,230.1 1080.6,227.3 1095.3,224.4 1110.0,221.6 1124.8,218.8 1139.5,216.1 1154.2,213.4 1168.9,210.8 1183.7,208.2 1198.4,205.6 1213.1,203.1 1227.8,200.7 1242.6,198.2 1257.3,195.8 1272.0,193.5 1272.0,229.5 1261.5,232.0 1250.9,234.5 1240.3,237.0 1229.8,239.5 1219.2,242.1 1208.7,244.6 1198.1,247.2 1187.6,249.8 1177.0,252.4 1166.5,255.0 1155.9,257.7 1145.4,260.3 1134.8,263.0 1124.3,265.7 1113.8,268.4 1103.2,271.1 1092.6,273.8 1082.1,276.6 1071.5,279.3 1061.0,282.1 1050.4,284.9 1039.9,287.7 1029.3,290.6 1018.8,293.4 1008.2,296.3 997.7,299.1 987.2,302.0 976.6,304.9 966.0,307.8 955.5,310.8 945.0,313.7 934.4,316.7 923.8,319.7 913.3,322.7 902.8,325.7 892.2,328.7 881.7,331.8 871.1,334.8 860.5,337.9 850.0,341.0" fill="#9c4566" stroke="none" stroke-width="1" />
<polygon points="690.6,320.1 712.9,314.0 726.7,315.8 704.6,321.8" fill="#a75674" stroke="none" stroke-width="1" opacity="0.55"/>
<polygon points="718.4,312.6 740.4,306.7 754.0,308.5 732.2,314.3" fill="#a75674" stroke="none" stroke-width="1" opacity="0.55"/>
<polygon points="745.9,305.3 767.5,299.7 780.8,301.5 759.4,307.1" fill="#a75674" stroke="none" stroke-width="1" opacity="0.55"/>
<polygon points="772.9,298.3 794.2,292.9 807.2,294.7 786.1,300.1" fill="#a75674" stroke="none" stroke-width="1" opacity="0.55"/>
<polygon points="799.5,291.6 820.5,286.4 833.2,288.2 812.5,293.4" fill="#a75674" stroke="none" stroke-width="1" opacity="0.55"/>
<polygon points="825.7,285.1 846.3,280.0 858.8,281.9 838.4,286.9" fill="#a75674" stroke="none" stroke-width="1" opacity="0.55"/>
<polygon points="851.5,278.8 871.8,273.9 884.0,275.8 863.9,280.6" fill="#a75674" stroke="none" stroke-width="1" opacity="0.55"/>
<polygon points="876.9,272.7 896.9,268.0 908.8,269.9 889.0,274.6" fill="#a75674" stroke="none" stroke-width="1" opacity="0.55"/>
<polygon points="901.9,266.9 921.6,262.4 933.3,264.2 913.8,268.7" fill="#a75674" stroke="none" stroke-width="1" opacity="0.55"/>
<polygon points="926.5,261.3 945.9,256.9 957.3,258.7 938.1,263.1" fill="#a75674" stroke="none" stroke-width="1" opacity="0.55"/>
<polygon points="950.7,255.8 969.8,251.6 980.9,253.4 962.1,257.6" fill="#a75674" stroke="none" stroke-width="1" opacity="0.55"/>
<polygon points="974.6,250.6 993.4,246.5 1004.3,248.3 985.6,252.4" fill="#a75674" stroke="none" stroke-width="1" opacity="0.55"/>
<polygon points="998.1,245.5 1016.7,241.6 1027.3,243.4 1008.9,247.3" fill="#a75674" stroke="none" stroke-width="1" opacity="0.55"/>
<polygon points="1021.3,240.6 1039.6,236.9 1050.0,238.6 1031.9,242.4" fill="#a75674" stroke="none" stroke-width="1" opacity="0.55"/>
<polygon points="1044.1,235.9 1062.1,232.3 1072.3,234.0 1054.5,237.7" fill="#a75674" stroke="none" stroke-width="1" opacity="0.55"/>
<polygon points="1066.5,231.4 1084.3,227.9 1094.2,229.6 1076.7,233.1" fill="#a75674" stroke="none" stroke-width="1" opacity="0.55"/>
<polygon points="1088.7,227.0 1106.1,223.7 1115.9,225.3 1098.6,228.7" fill="#a75674" stroke="none" stroke-width="1" opacity="0.55"/>
<polygon points="1110.4,222.8 1127.6,219.6 1137.1,221.2 1120.1,224.4" fill="#a75674" stroke="none" stroke-width="1" opacity="0.55"/>
<polygon points="1131.9,218.8 1148.8,215.6 1158.1,217.2 1141.3,220.3" fill="#a75674" stroke="none" stroke-width="1" opacity="0.55"/>
<polygon points="1153.0,214.9 1169.6,211.8 1178.7,213.3 1162.2,216.4" fill="#a75674" stroke="none" stroke-width="1" opacity="0.55"/>
<polygon points="1173.8,211.1 1190.1,208.2 1198.9,209.7 1182.7,212.6" fill="#a75674" stroke="none" stroke-width="1" opacity="0.55"/>
<polygon points="1194.2,207.5 1210.3,204.7 1218.9,206.1 1202.9,208.9" fill="#a75674" stroke="none" stroke-width="1" opacity="0.55"/>
<polygon points="1214.3,204.0 1230.2,201.3 1238.5,202.7 1222.8,205.4" fill="#a75674" stroke="none" stroke-width="1" opacity="0.55"/>
<polygon points="1234.2,200.6 1249.8,198.0 1257.7,199.4 1242.3,202.0" fill="#a75674" stroke="none" stroke-width="1" opacity="0.55"/>
<polygon points="1253.7,197.4 1269.1,194.9 1276.7,196.2 1261.6,198.7" fill="#a75674" stroke="none" stroke-width="1" opacity="0.55"/>
<polygon points="1272.9,194.3 1288.0,191.9 1295.4,193.1 1280.5,195.5" fill="#a75674" stroke="none" stroke-width="1" opacity="0.55"/>
<polygon points="1291.8,191.2 1306.9,188.8 1314.0,190.0 1299.1,192.5" fill="#a75674" stroke="none" stroke-width="1" opacity="0.55"/>
<polygon points="711.8,323.2 722.8,320.2 731.9,321.3 721.0,324.3" fill="#a75674" stroke="none" stroke-width="1" opacity="0.55"/>
<polygon points="726.6,319.1 748.5,313.2 757.4,314.4 735.7,320.3" fill="#a75674" stroke="none" stroke-width="1" opacity="0.55"/>
<polygon points="753.9,311.8 775.4,306.1 784.1,307.3 762.8,313.0" fill="#a75674" stroke="none" stroke-width="1" opacity="0.55"/>
<polygon points="780.7,304.7 801.8,299.2 810.5,300.4 789.5,305.9" fill="#a75674" stroke="none" stroke-width="1" opacity="0.55"/>
<polygon points="807.1,297.8 827.9,292.5 836.3,293.7 815.7,299.0" fill="#a75674" stroke="none" stroke-width="1" opacity="0.55"/>
<polygon points="833.1,291.2 853.5,286.1 861.8,287.3 841.5,292.4" fill="#a75674" stroke="none" stroke-width="1" opacity="0.55"/>
<polygon points="858.6,284.8 878.8,279.9 886.9,281.1 866.9,286.0" fill="#a75674" stroke="none" stroke-width="1" opacity="0.55"/>
<polygon points="883.8,278.7 903.6,273.9 911.5,275.1 891.8,279.9" fill="#a75674" stroke="none" stroke-width="1" opacity="0.55"/>
<polygon points="908.5,272.7 928.1,268.1 935.8,269.3 916.4,273.9" fill="#a75674" stroke="none" stroke-width="1" opacity="0.55"/>
<polygon points="932.9,267.0 952.1,262.5 959.7,263.7 940.6,268.2" fill="#a75674" stroke="none" stroke-width="1" opacity="0.55"/>
<polygon points="956.9,261.4 975.8,257.1 983.2,258.3 964.4,262.6" fill="#a75674" stroke="none" stroke-width="1" opacity="0.55"/>
<polygon points="980.5,256.1 999.1,251.9 1006.3,253.1 987.8,257.3" fill="#a75674" stroke="none" stroke-width="1" opacity="0.55"/>
<polygon points="1003.7,250.9 1022.2,246.9 1029.2,248.1 1010.9,252.1" fill="#a75674" stroke="none" stroke-width="1" opacity="0.55"/>
<polygon points="1026.7,245.9 1044.9,242.0 1051.8,243.2 1033.7,247.1" fill="#a75674" stroke="none" stroke-width="1" opacity="0.55"/>
<polygon points="1049.4,241.1 1067.2,237.3 1074.0,238.4 1056.3,242.2" fill="#a75674" stroke="none" stroke-width="1" opacity="0.55"/>
<polygon points="1071.7,236.4 1089.3,232.8 1095.9,233.9 1078.4,237.5" fill="#a75674" stroke="none" stroke-width="1" opacity="0.55"/>
<polygon points="1093.6,231.9 1110.9,228.4 1117.4,229.4 1100.2,233.0" fill="#a75674" stroke="none" stroke-width="1" opacity="0.55"/>
<polygon points="1115.2,227.5 1132.2,224.2 1138.5,225.2 1121.6,228.6" fill="#a75674" stroke="none" stroke-width="1" opacity="0.55"/>
<polygon points="1136.4,223.3 1153.2,220.1 1159.3,221.1 1142.7,224.4" fill="#a75674" stroke="none" stroke-width="1" opacity="0.55"/>
<polygon points="1157.3,219.3 1173.8,216.2 1179.8,217.2 1163.4,220.3" fill="#a75674" stroke="none" stroke-width="1" opacity="0.55"/>
<polygon points="1177.9,215.4 1194.1,212.4 1199.9,213.3 1183.9,216.4" fill="#a75674" stroke="none" stroke-width="1" opacity="0.55"/>
<polygon points="1198.1,211.6 1214.0,208.7 1219.7,209.7 1203.9,212.6" fill="#a75674" stroke="none" stroke-width="1" opacity="0.55"/>
<polygon points="1218.0,208.0 1233.6,205.2 1239.1,206.1 1223.6,208.9" fill="#a75674" stroke="none" stroke-width="1" opacity="0.55"/>
<polygon points="1237.5,204.5 1252.9,201.8 1258.2,202.7 1243.0,205.4" fill="#a75674" stroke="none" stroke-width="1" opacity="0.55"/>
<polygon points="1256.7,201.1 1271.9,198.5 1277.0,199.4 1262.0,202.0" fill="#a75674" stroke="none" stroke-width="1" opacity="0.55"/>
<polygon points="1275.6,197.9 1290.5,195.4 1295.4,196.2 1280.7,198.7" fill="#a75674" stroke="none" stroke-width="1" opacity="0.55"/>
<polygon points="1294.2,194.7 1308.9,192.2 1313.6,193.0 1299.1,195.5" fill="#a75674" stroke="none" stroke-width="1" opacity="0.55"/>
<polygon points="730.8,325.2 752.6,319.2 758.5,319.9 736.8,325.9" fill="#a75674" stroke="none" stroke-width="1" opacity="0.55"/>
<polygon points="758.0,317.7 779.4,311.9 785.2,312.7 763.9,318.5" fill="#a75674" stroke="none" stroke-width="1" opacity="0.55"/>
<polygon points="784.7,310.5 805.7,304.9 811.4,305.7 790.5,311.3" fill="#a75674" stroke="none" stroke-width="1" opacity="0.55"/>
<polygon points="811.0,303.6 831.7,298.2 837.2,298.9 816.6,304.3" fill="#a75674" stroke="none" stroke-width="1" opacity="0.55"/>
<polygon points="836.8,296.8 857.2,291.6 862.6,292.4 842.3,297.6" fill="#a75674" stroke="none" stroke-width="1" opacity="0.55"/>
<polygon points="862.2,290.3 882.2,285.3 887.6,286.1 867.6,291.1" fill="#a75674" stroke="none" stroke-width="1" opacity="0.55"/>
<polygon points="887.2,284.1 906.9,279.2 912.2,280.0 892.5,284.9" fill="#a75674" stroke="none" stroke-width="1" opacity="0.55"/>
<polygon points="911.8,278.0 931.2,273.3 936.3,274.1 917.0,278.8" fill="#a75674" stroke="none" stroke-width="1" opacity="0.55"/>
<polygon points="936.0,272.2 955.1,267.6 960.1,268.4 941.1,273.0" fill="#a75674" stroke="none" stroke-width="1" opacity="0.55"/>
<polygon points="959.9,266.5 978.6,262.1 983.5,262.9 964.8,267.3" fill="#a75674" stroke="none" stroke-width="1" opacity="0.55"/>
<polygon points="983.3,261.1 1001.8,256.8 1006.5,257.6 988.1,261.8" fill="#a75674" stroke="none" stroke-width="1" opacity="0.55"/>
<polygon points="1006.3,255.8 1024.6,251.7 1029.2,252.5 1011.1,256.6" fill="#a75674" stroke="none" stroke-width="1" opacity="0.55"/>
<polygon points="1029.2,250.7 1047.2,246.7 1051.8,247.4 1033.8,251.4" fill="#a75674" stroke="none" stroke-width="1" opacity="0.55"/>
<polygon points="1051.7,245.7 1069.5,241.8 1074.0,242.6 1056.2,246.4" fill="#a75674" stroke="none" stroke-width="1" opacity="0.55"/>
<polygon points="1073.9,240.9 1091.4,237.2 1095.8,237.9 1078.4,241.6" fill="#a75674" stroke="none" stroke-width="1" opacity="0.55"/>
<polygon points="1095.7,236.3 1112.9,232.7 1117.2,233.4 1100.1,237.0" fill="#a75674" stroke="none" stroke-width="1" opacity="0.55"/>
<polygon points="1117.2,231.8 1134.1,228.3 1138.3,229.0 1121.5,232.5" fill="#a75674" stroke="none" stroke-width="1" opacity="0.55"/>
<polygon points="1138.3,227.5 1155.0,224.1 1159.0,224.8 1142.5,228.1" fill="#a75674" stroke="none" stroke-width="1" opacity="0.55"/>
<polygon points="1159.1,223.3 1175.4,220.1 1179.4,220.7 1163.1,224.0" fill="#a75674" stroke="none" stroke-width="1" opacity="0.55"/>
<polygon points="1179.5,219.3 1195.6,216.2 1199.5,216.8 1183.5,219.9" fill="#a75674" stroke="none" stroke-width="1" opacity="0.55"/>
<polygon points="1199.6,215.4 1215.4,212.4 1219.1,213.0 1203.4,216.0" fill="#a75674" stroke="none" stroke-width="1" opacity="0.55"/>
<polygon points="1219.3,211.6 1234.8,208.7 1238.5,209.3 1223.0,212.3" fill="#a75674" stroke="none" stroke-width="1" opacity="0.55"/>
<polygon points="1238.7,208.0 1253.9,205.2 1257.4,205.8 1242.3,208.6" fill="#a75674" stroke="none" stroke-width="1" opacity="0.55"/>
<polygon points="1257.7,204.5 1272.6,201.8 1276.0,202.4 1261.2,205.1" fill="#a75674" stroke="none" stroke-width="1" opacity="0.55"/>
<polygon points="1276.3,201.2 1291.0,198.5 1294.3,199.1 1279.7,201.7" fill="#a75674" stroke="none" stroke-width="1" opacity="0.55"/>
<polygon points="1294.7,197.9 1309.1,195.4 1312.3,195.9 1297.9,198.4" fill="#a75674" stroke="none" stroke-width="1" opacity="0.55"/>
<polygon points="1312.7,194.7 1327.1,192.2 1330.2,192.7 1315.8,195.2" fill="#a75674" stroke="none" stroke-width="1" opacity="0.55"/>
<polygon points="743.7,327.2 754.5,324.2 770.0,326.2 759.3,329.2" fill="#a75674" stroke="none" stroke-width="1" opacity="0.55"/>
<polygon points="758.3,323.2 779.6,317.3 794.8,319.3 773.7,325.2" fill="#a75674" stroke="none" stroke-width="1" opacity="0.55"/>
<polygon points="784.9,315.9 805.9,310.2 820.8,312.2 800.1,317.9" fill="#a75674" stroke="none" stroke-width="1" opacity="0.55"/>
<polygon points="811.1,308.8 831.8,303.3 846.4,305.4 826.0,310.8" fill="#a75674" stroke="none" stroke-width="1" opacity="0.55"/>
<polygon points="836.9,302.0 857.3,296.7 871.6,298.7 851.5,304.0" fill="#a75674" stroke="none" stroke-width="1" opacity="0.55"/>
<polygon points="862.3,295.4 882.3,290.3 896.3,292.3 876.6,297.4" fill="#a75674" stroke="none" stroke-width="1" opacity="0.55"/>
<polygon points="887.3,289.0 906.9,284.1 920.6,286.1 901.2,291.1" fill="#a75674" stroke="none" stroke-width="1" opacity="0.55"/>
<polygon points="911.8,282.9 931.1,278.1 944.5,280.1 925.4,284.9" fill="#a75674" stroke="none" stroke-width="1" opacity="0.55"/>
<polygon points="935.9,276.9 954.9,272.3 968.0,274.3 949.3,279.0" fill="#a75674" stroke="none" stroke-width="1" opacity="0.55"/>
<polygon points="959.7,271.2 978.4,266.7 991.2,268.7 972.7,273.2" fill="#a75674" stroke="none" stroke-width="1" opacity="0.55"/>
<polygon points="983.0,265.6 1001.4,261.3 1013.9,263.3 995.7,267.6" fill="#a75674" stroke="none" stroke-width="1" opacity="0.55"/>
<polygon points="1006.0,260.2 1024.1,256.1 1036.2,258.1 1018.4,262.3" fill="#a75674" stroke="none" stroke-width="1" opacity="0.55"/>
<polygon points="1028.6,255.0 1046.6,250.9 1058.5,252.9 1040.7,257.0" fill="#a75674" stroke="none" stroke-width="1" opacity="0.55"/>
<polygon points="1051.1,249.9 1068.9,246.0 1080.5,247.9 1063.0,251.9" fill="#a75674" stroke="none" stroke-width="1" opacity="0.55"/>
<polygon points="1073.3,245.0 1090.7,241.2 1102.2,243.1 1084.9,246.9" fill="#a75674" stroke="none" stroke-width="1" opacity="0.55"/>
<polygon points="1095.1,240.3 1112.2,236.6 1123.4,238.4 1106.5,242.1" fill="#a75674" stroke="none" stroke-width="1" opacity="0.55"/>
<polygon points="1116.5,235.7 1133.4,232.1 1144.3,233.9 1127.6,237.5" fill="#a75674" stroke="none" stroke-width="1" opacity="0.55"/>
<polygon points="1137.6,231.2 1154.1,227.8 1164.8,229.6 1148.5,233.0" fill="#a75674" stroke="none" stroke-width="1" opacity="0.55"/>
<polygon points="1158.3,227.0 1174.6,223.6 1185.0,225.4 1168.9,228.7" fill="#a75674" stroke="none" stroke-width="1" opacity="0.55"/>
<polygon points="1178.6,222.8 1194.6,219.6 1204.8,221.3 1189.0,224.5" fill="#a75674" stroke="none" stroke-width="1" opacity="0.55"/>
<polygon points="1198.6,218.8 1214.4,215.7 1224.3,217.4 1208.7,220.5" fill="#a75674" stroke="none" stroke-width="1" opacity="0.55"/>
<polygon points="1218.3,215.0 1233.7,212.0 1243.3,213.6 1228.1,216.6" fill="#a75674" stroke="none" stroke-width="1" opacity="0.55"/>
<polygon points="1237.6,211.3 1252.7,208.4 1262.0,209.9 1247.1,212.8" fill="#a75674" stroke="none" stroke-width="1" opacity="0.55"/>
<polygon points="1256.5,207.7 1271.3,204.9 1280.3,206.3 1265.7,209.2" fill="#a75674" stroke="none" stroke-width="1" opacity="0.55"/>
<polygon points="1275.0,204.2 1289.6,201.5 1298.3,202.9 1283.9,205.7" fill="#a75674" stroke="none" stroke-width="1" opacity="0.55"/>
<polygon points="1293.2,200.8 1307.5,198.2 1315.9,199.6 1301.8,202.2" fill="#a75674" stroke="none" stroke-width="1" opacity="0.55"/>
<polygon points="1311.1,197.5 1325.3,194.9 1333.3,196.3 1319.4,198.9" fill="#a75674" stroke="none" stroke-width="1" opacity="0.55"/>
<polygon points="771.8,330.3 793.0,324.4 808.8,326.4 787.9,332.4" fill="#a75674" stroke="none" stroke-width="1" opacity="0.55"/>
<polygon points="798.2,322.9 819.0,317.2 834.5,319.3 814.0,325.0" fill="#a75674" stroke="none" stroke-width="1" opacity="0.55"/>
<polygon points="824.2,315.8 844.6,310.2 859.8,312.3 839.6,317.9" fill="#a75674" stroke="none" stroke-width="1" opacity="0.55"/>
<polygon points="849.7,308.9 869.8,303.5 884.7,305.6 864.8,311.0" fill="#a75674" stroke="none" stroke-width="1" opacity="0.55"/>
<polygon points="874.7,302.2 894.5,297.0 909.1,299.1 889.6,304.3" fill="#a75674" stroke="none" stroke-width="1" opacity="0.55"/>
<polygon points="899.4,295.7 918.8,290.7 933.1,292.8 913.9,297.8" fill="#a75674" stroke="none" stroke-width="1" opacity="0.55"/>
<polygon points="923.6,289.5 942.7,284.6 956.7,286.7 937.8,291.6" fill="#a75674" stroke="none" stroke-width="1" opacity="0.55"/>
<polygon points="947.4,283.4 966.1,278.7 979.8,280.8 961.3,285.5" fill="#a75674" stroke="none" stroke-width="1" opacity="0.55"/>
<polygon points="970.8,277.5 989.2,273.0 1002.6,275.1 984.4,279.7" fill="#a75674" stroke="none" stroke-width="1" opacity="0.55"/>
<polygon points="993.8,271.9 1011.9,267.5 1024.9,269.6 1007.1,274.0" fill="#a75674" stroke="none" stroke-width="1" opacity="0.55"/>
<polygon points="1016.4,266.4 1034.2,262.1 1046.9,264.2 1029.4,268.5" fill="#a75674" stroke="none" stroke-width="1" opacity="0.55"/>
<polygon points="1038.6,261.1 1056.3,257.0 1068.7,259.0 1051.3,263.2" fill="#a75674" stroke="none" stroke-width="1" opacity="0.55"/>
<polygon points="1060.7,255.9 1078.3,251.8 1090.5,253.9 1073.1,258.0" fill="#a75674" stroke="none" stroke-width="1" opacity="0.55"/>
<polygon points="1082.7,250.8 1100.0,246.9 1111.9,248.9 1094.8,252.8" fill="#a75674" stroke="none" stroke-width="1" opacity="0.55"/>
<polygon points="1104.3,245.9 1121.2,242.1 1132.9,244.1 1116.1,247.9" fill="#a75674" stroke="none" stroke-width="1" opacity="0.55"/>
<polygon points="1125.4,241.2 1142.1,237.5 1153.5,239.4 1137.1,243.1" fill="#a75674" stroke="none" stroke-width="1" opacity="0.55"/>
<polygon points="1146.3,236.6 1162.6,233.0 1173.8,234.9 1157.6,238.5" fill="#a75674" stroke="none" stroke-width="1" opacity="0.55"/>
<polygon points="1166.7,232.2 1182.8,228.7 1193.7,230.5 1177.8,234.0" fill="#a75674" stroke="none" stroke-width="1" opacity="0.55"/>
<polygon points="1186.8,227.9 1202.6,224.6 1213.2,226.3 1197.6,229.7" fill="#a75674" stroke="none" stroke-width="1" opacity="0.55"/>
<polygon points="1206.5,223.8 1222.0,220.5 1232.4,222.3 1217.1,225.5" fill="#a75674" stroke="none" stroke-width="1" opacity="0.55"/>
<polygon points="1225.9,219.8 1241.1,216.7 1251.1,218.3 1236.1,221.5" fill="#a75674" stroke="none" stroke-width="1" opacity="0.55"/>
<polygon points="1244.8,215.9 1259.7,212.9 1269.5,214.5 1254.8,217.5" fill="#a75674" stroke="none" stroke-width="1" opacity="0.55"/>
<polygon points="1263.4,212.1 1278.0,209.2 1287.4,210.8 1273.1,213.7" fill="#a75674" stroke="none" stroke-width="1" opacity="0.55"/>
<polygon points="1281.6,208.5 1295.9,205.7 1305.0,207.2 1290.9,210.1" fill="#a75674" stroke="none" stroke-width="1" opacity="0.55"/>
<polygon points="1299.4,205.0 1313.4,202.3 1322.1,203.7 1308.4,206.5" fill="#a75674" stroke="none" stroke-width="1" opacity="0.55"/>
<polygon points="1316.8,201.6 1330.6,198.9 1339.0,200.3 1325.5,203.0" fill="#a75674" stroke="none" stroke-width="1" opacity="0.55"/>
<polygon points="1334.0,198.2 1347.7,195.6 1355.8,196.9 1342.3,199.6" fill="#a75674" stroke="none" stroke-width="1" opacity="0.55"/>
<polygon points="795.4,333.7 805.8,330.8 813.6,331.8 803.3,334.7" fill="#a75674" stroke="none" stroke-width="1" opacity="0.55"/>
<polygon points="809.4,329.7 830.0,323.9 837.7,324.9 817.3,330.7" fill="#a75674" stroke="none" stroke-width="1" opacity="0.55"/>
<polygon points="835.1,322.5 855.4,316.9 863.0,317.9 842.8,323.5" fill="#a75674" stroke="none" stroke-width="1" opacity="0.55"/>
<polygon points="860.4,315.5 880.3,310.1 887.7,311.1 868.0,316.5" fill="#a75674" stroke="none" stroke-width="1" opacity="0.55"/>
<polygon points="885.2,308.7 904.7,303.4 912.0,304.5 892.6,309.7" fill="#a75674" stroke="none" stroke-width="1" opacity="0.55"/>
<polygon points="909.6,302.1 928.8,297.0 935.9,298.1 916.9,303.2" fill="#a75674" stroke="none" stroke-width="1" opacity="0.55"/>
<polygon points="933.5,295.8 952.4,290.9 959.4,291.9 940.7,296.8" fill="#a75674" stroke="none" stroke-width="1" opacity="0.55"/>
<polygon points="957.1,289.6 975.6,284.9 982.4,285.9 964.0,290.7" fill="#a75674" stroke="none" stroke-width="1" opacity="0.55"/>
<polygon points="980.2,283.7 998.4,279.1 1005.1,280.1 987.0,284.7" fill="#a75674" stroke="none" stroke-width="1" opacity="0.55"/>
<polygon points="1002.9,277.9 1020.8,273.4 1027.3,274.5 1009.6,279.0" fill="#a75674" stroke="none" stroke-width="1" opacity="0.55"/>
<polygon points="1025.2,272.3 1042.8,268.0 1049.2,269.0 1031.7,273.4" fill="#a75674" stroke="none" stroke-width="1" opacity="0.55"/>
<polygon points="1047.2,266.9 1064.4,262.7 1070.6,263.8 1053.5,268.0" fill="#a75674" stroke="none" stroke-width="1" opacity="0.55"/>
<polygon points="1068.7,261.7 1086.1,257.5 1092.2,258.5 1074.9,262.7" fill="#a75674" stroke="none" stroke-width="1" opacity="0.55"/>
<polygon points="1090.5,256.5 1107.6,252.4 1113.6,253.4 1096.5,257.5" fill="#a75674" stroke="none" stroke-width="1" opacity="0.55"/>
<polygon points="1111.9,251.4 1128.7,247.5 1134.5,248.5 1117.8,252.4" fill="#a75674" stroke="none" stroke-width="1" opacity="0.55"/>
<polygon points="1132.9,246.5 1149.4,242.7 1155.1,243.7 1138.7,247.5" fill="#a75674" stroke="none" stroke-width="1" opacity="0.55"/>
<polygon points="1153.5,241.8 1169.7,238.1 1175.3,239.1 1159.2,242.7" fill="#a75674" stroke="none" stroke-width="1" opacity="0.55"/>
<polygon points="1173.7,237.2 1189.6,233.7 1195.1,234.6 1179.3,238.2" fill="#a75674" stroke="none" stroke-width="1" opacity="0.55"/>
<polygon points="1193.6,232.8 1209.2,229.4 1214.5,230.3 1199.0,233.7" fill="#a75674" stroke="none" stroke-width="1" opacity="0.55"/>
<polygon points="1213.0,228.5 1228.4,225.2 1233.5,226.1 1218.3,229.4" fill="#a75674" stroke="none" stroke-width="1" opacity="0.55"/>
<polygon points="1232.2,224.4 1247.2,221.2 1252.2,222.0 1237.3,225.3" fill="#a75674" stroke="none" stroke-width="1" opacity="0.55"/>
<polygon points="1250.9,220.4 1265.6,217.3 1270.5,218.1 1255.9,221.2" fill="#a75674" stroke="none" stroke-width="1" opacity="0.55"/>
<polygon points="1269.2,216.5 1283.5,213.5 1288.3,214.3 1274.1,217.3" fill="#a75674" stroke="none" stroke-width="1" opacity="0.55"/>
<polygon points="1287.1,212.7 1301.1,209.8 1305.7,210.6 1291.8,213.5" fill="#a75674" stroke="none" stroke-width="1" opacity="0.55"/>
<polygon points="1304.6,209.1 1318.3,206.2 1322.7,207.0 1309.1,209.8" fill="#a75674" stroke="none" stroke-width="1" opacity="0.55"/>
<polygon points="1321.7,205.5 1335.1,202.8 1339.3,203.5 1326.1,206.3" fill="#a75674" stroke="none" stroke-width="1" opacity="0.55"/>
<polygon points="1338.5,202.1 1351.7,199.3 1355.8,200.0 1342.7,202.8" fill="#a75674" stroke="none" stroke-width="1" opacity="0.55"/>
<polygon points="810.4,335.2 831.0,329.3 839.7,330.4 819.2,336.3" fill="#a75674" stroke="none" stroke-width="1" opacity="0.55"/>
<polygon points="836.1,327.9 856.3,322.2 864.8,323.3 844.7,329.0" fill="#a75674" stroke="none" stroke-width="1" opacity="0.55"/>
<polygon points="861.3,320.8 881.2,315.2 889.5,316.4 869.8,321.9" fill="#a75674" stroke="none" stroke-width="1" opacity="0.55"/>
<polygon points="886.1,313.9 905.6,308.5 913.8,309.7 894.4,315.0" fill="#a75674" stroke="none" stroke-width="1" opacity="0.55"/>
<polygon points="910.5,307.2 929.6,302.0 937.6,303.2 918.6,308.4" fill="#a75674" stroke="none" stroke-width="1" opacity="0.55"/>
<polygon points="934.4,300.8 953.2,295.8 961.0,296.9 942.3,301.9" fill="#a75674" stroke="none" stroke-width="1" opacity="0.55"/>
<polygon points="957.8,294.5 976.3,289.7 984.0,290.8 965.6,295.7" fill="#a75674" stroke="none" stroke-width="1" opacity="0.55"/>
<polygon points="980.9,288.5 999.0,283.8 1006.5,284.9 988.5,289.6" fill="#a75674" stroke="none" stroke-width="1" opacity="0.55"/>
<polygon points="1003.5,282.6 1021.3,278.0 1028.7,279.2 1011.0,283.8" fill="#a75674" stroke="none" stroke-width="1" opacity="0.55"/>
<polygon points="1025.8,276.9 1043.3,272.5 1050.4,273.7 1033.0,278.1" fill="#a75674" stroke="none" stroke-width="1" opacity="0.55"/>
<polygon points="1047.6,271.4 1064.8,267.2 1071.7,268.3 1054.7,272.6" fill="#a75674" stroke="none" stroke-width="1" opacity="0.55"/>
<polygon points="1069.0,266.1 1086.1,261.9 1092.9,263.0 1076.0,267.2" fill="#a75674" stroke="none" stroke-width="1" opacity="0.55"/>
<polygon points="1090.5,260.9 1107.6,256.7 1114.3,257.8 1097.2,262.0" fill="#a75674" stroke="none" stroke-width="1" opacity="0.55"/>
<polygon points="1111.8,255.7 1128.7,251.7 1135.2,252.7 1118.5,256.8" fill="#a75674" stroke="none" stroke-width="1" opacity="0.55"/>
<polygon points="1132.8,250.7 1149.3,246.8 1155.7,247.8 1139.3,251.7" fill="#a75674" stroke="none" stroke-width="1" opacity="0.55"/>
<polygon points="1153.4,245.8 1169.6,242.1 1175.8,243.1 1159.8,246.9" fill="#a75674" stroke="none" stroke-width="1" opacity="0.55"/>
<polygon points="1173.6,241.1 1189.5,237.5 1195.6,238.5 1179.8,242.2" fill="#a75674" stroke="none" stroke-width="1" opacity="0.55"/>
<polygon points="1193.4,236.6 1209.0,233.1 1215.0,234.1 1199.5,237.6" fill="#a75674" stroke="none" stroke-width="1" opacity="0.55"/>
<polygon points="1212.8,232.2 1228.1,228.8 1233.9,229.8 1218.8,233.2" fill="#a75674" stroke="none" stroke-width="1" opacity="0.55"/>
<polygon points="1231.9,228.0 1246.9,224.7 1252.6,225.6 1237.7,228.9" fill="#a75674" stroke="none" stroke-width="1" opacity="0.55"/>
<polygon points="1250.6,223.9 1265.2,220.7 1270.7,221.6 1256.2,224.8" fill="#a75674" stroke="none" stroke-width="1" opacity="0.55"/>
<polygon points="1268.9,219.9 1283.1,216.8 1288.5,217.7 1274.3,220.8" fill="#a75674" stroke="none" stroke-width="1" opacity="0.55"/>
<polygon points="1286.7,216.0 1300.6,213.0 1305.8,213.8 1292.0,216.9" fill="#a75674" stroke="none" stroke-width="1" opacity="0.55"/>
<polygon points="1304.1,212.2 1317.7,209.3 1322.7,210.1 1309.2,213.1" fill="#a75674" stroke="none" stroke-width="1" opacity="0.55"/>
<polygon points="1321.1,208.6 1334.4,205.7 1339.2,206.5 1326.0,209.4" fill="#a75674" stroke="none" stroke-width="1" opacity="0.55"/>
<polygon points="1337.7,205.0 1350.8,202.3 1355.4,203.0 1342.5,205.8" fill="#a75674" stroke="none" stroke-width="1" opacity="0.55"/>
<polygon points="1354.0,201.6 1367.1,198.8 1371.5,199.5 1358.6,202.3" fill="#a75674" stroke="none" stroke-width="1" opacity="0.55"/>
<polygon points="827.7,337.8 837.9,334.9 855.0,337.1 845.0,340.0" fill="#a75674" stroke="none" stroke-width="1" opacity="0.55"/>
<polygon points="841.5,333.8 861.6,328.1 878.4,330.3 858.5,336.0" fill="#a75674" stroke="none" stroke-width="1" opacity="0.55"/>
<polygon points="866.6,326.6 886.4,321.1 902.8,323.3 883.3,328.9" fill="#a75674" stroke="none" stroke-width="1" opacity="0.55"/>
<polygon points="891.3,319.7 910.7,314.3 926.8,316.5 907.7,321.9" fill="#a75674" stroke="none" stroke-width="1" opacity="0.55"/>
<polygon points="915.5,312.9 934.5,307.7 950.4,309.9 931.6,315.2" fill="#a75674" stroke="none" stroke-width="1" opacity="0.55"/>
<polygon points="939.2,306.4 957.9,301.3 973.4,303.5 955.0,308.6" fill="#a75674" stroke="none" stroke-width="1" opacity="0.55"/>
<polygon points="962.6,300.0 980.9,295.1 996.1,297.4 978.0,302.3" fill="#a75674" stroke="none" stroke-width="1" opacity="0.55"/>
<polygon points="985.5,293.9 1003.5,289.1 1018.3,291.4 1000.6,296.1" fill="#a75674" stroke="none" stroke-width="1" opacity="0.55"/>
<polygon points="1008.0,287.9 1025.6,283.3 1040.1,285.6 1022.7,290.2" fill="#a75674" stroke="none" stroke-width="1" opacity="0.55"/>
<polygon points="1030.0,282.2 1047.4,277.7 1061.5,279.9 1044.5,284.4" fill="#a75674" stroke="none" stroke-width="1" opacity="0.55"/>
<polygon points="1051.7,276.6 1068.7,272.2 1082.6,274.4 1065.8,278.8" fill="#a75674" stroke="none" stroke-width="1" opacity="0.55"/>
<polygon points="1073.0,271.1 1089.7,266.9 1103.2,269.1 1086.7,273.4" fill="#a75674" stroke="none" stroke-width="1" opacity="0.55"/>
<polygon points="1093.9,265.9 1110.9,261.6 1124.1,263.8 1107.3,268.1" fill="#a75674" stroke="none" stroke-width="1" opacity="0.55"/>
<polygon points="1115.2,260.6 1131.9,256.5 1144.8,258.6 1128.3,262.8" fill="#a75674" stroke="none" stroke-width="1" opacity="0.55"/>
<polygon points="1136.1,255.4 1152.5,251.4 1165.2,253.6 1148.9,257.6" fill="#a75674" stroke="none" stroke-width="1" opacity="0.55"/>
<polygon points="1156.6,250.5 1172.7,246.6 1185.1,248.7 1169.2,252.6" fill="#a75674" stroke="none" stroke-width="1" opacity="0.55"/>
<polygon points="1176.7,245.7 1192.5,241.9 1204.6,243.9 1189.0,247.7" fill="#a75674" stroke="none" stroke-width="1" opacity="0.55"/>
<polygon points="1196.4,241.0 1211.9,237.4 1223.7,239.3 1208.4,243.0" fill="#a75674" stroke="none" stroke-width="1" opacity="0.55"/>
<polygon points="1215.7,236.5 1230.9,233.0 1242.4,234.9 1227.5,238.4" fill="#a75674" stroke="none" stroke-width="1" opacity="0.55"/>
<polygon points="1234.6,232.1 1249.5,228.7 1260.7,230.6 1246.1,234.0" fill="#a75674" stroke="none" stroke-width="1" opacity="0.55"/>
<polygon points="1253.2,227.9 1267.7,224.6 1278.7,226.4 1264.4,229.7" fill="#a75674" stroke="none" stroke-width="1" opacity="0.55"/>
<polygon points="1271.3,223.8 1285.5,220.6 1296.2,222.4 1282.2,225.6" fill="#a75674" stroke="none" stroke-width="1" opacity="0.55"/>
<polygon points="1289.0,219.8 1302.9,216.7 1313.2,218.4 1299.6,221.6" fill="#a75674" stroke="none" stroke-width="1" opacity="0.55"/>
<polygon points="1306.3,215.9 1319.8,212.9 1329.7,214.6 1316.5,217.6" fill="#a75674" stroke="none" stroke-width="1" opacity="0.55"/>
<polygon points="1323.1,212.2 1336.3,209.2 1345.9,210.8 1333.0,213.8" fill="#a75674" stroke="none" stroke-width="1" opacity="0.55"/>
<polygon points="1339.5,208.5 1352.4,205.6 1361.6,207.2 1349.0,210.1" fill="#a75674" stroke="none" stroke-width="1" opacity="0.55"/>
<polygon points="1355.6,204.9 1368.3,202.1 1377.1,203.6 1364.7,206.4" fill="#a75674" stroke="none" stroke-width="1" opacity="0.55"/>
<polyline points="707.2,323.0 717.0,320.4 726.9,317.7 736.7,315.0 746.6,312.4 756.4,309.8 766.2,307.2 776.1,304.6 785.9,302.0 795.7,299.5 805.6,296.9 815.4,294.4 825.2,291.9 835.1,289.5 844.9,287.0 854.7,284.6 864.5,282.2 874.3,279.8 884.1,277.4 894.0,275.0 903.8,272.7 913.6,270.4 923.4,268.1 933.2,265.8 943.0,263.5 952.8,261.3 962.6,259.0 972.4,256.8 982.2,254.6 992.0,252.5 1001.8,250.3 1011.6,248.1 1021.5,246.0 1031.3,243.9 1041.2,241.8 1051.0,239.7 1060.8,237.7 1070.7,235.6 1080.5,233.6 1090.3,231.6 1100.2,229.6 1110.0,227.7 1119.8,225.7 1129.6,223.8 1139.4,221.9 1149.2,220.0 1159.0,218.1 1168.8,216.3 1178.6,214.4 1188.4,212.6 1198.2,210.8 1208.0,209.1 1217.8,207.3 1227.5,205.6 1237.3,203.8 1247.0,202.1 1256.8,200.4 1266.5,198.8 1276.3,197.1 1286.0,195.5 1295.7,193.9 1305.4,192.2" fill="none" stroke="#ff0000" stroke-width="0.9" />
<polyline points="723.1,325.0 732.8,322.4 742.5,319.7 752.3,317.0 762.0,314.4 771.7,311.8 781.5,309.2 791.2,306.6 800.9,304.1 810.6,301.5 820.4,299.0 830.1,296.5 839.8,294.0 849.5,291.5 859.2,289.1 868.9,286.7 878.6,284.2 888.3,281.8 898.0,279.5 907.7,277.1 917.4,274.8 927.1,272.4 936.7,270.1 946.4,267.9 956.1,265.6 965.8,263.3 975.4,261.1 985.1,258.9 994.8,256.7 1004.4,254.5 1014.1,252.3 1023.8,250.2 1033.6,248.0 1043.3,245.9 1053.1,243.8 1062.8,241.7 1072.5,239.6 1082.3,237.6 1092.0,235.5 1101.7,233.5 1111.4,231.5 1121.1,229.5 1130.8,227.5 1140.5,225.6 1150.2,223.7 1159.9,221.8 1169.6,219.9 1179.2,218.0 1188.9,216.1 1198.6,214.3 1208.2,212.5 1217.8,210.7 1227.5,208.9 1237.1,207.1 1246.7,205.4 1256.3,203.7 1265.8,201.9 1275.4,200.3 1284.9,198.6 1294.5,196.9 1304.0,195.2 1313.6,193.6" fill="none" stroke="#ff0000" stroke-width="0.9" />
<polyline points="726.4,325.5 736.1,322.8 745.8,320.1 755.6,317.5 765.3,314.8 775.0,312.2 784.7,309.6 794.4,307.1 804.1,304.5 813.8,302.0 823.5,299.4 833.2,296.9 842.9,294.4 852.5,292.0 862.2,289.5 871.9,287.1 881.6,284.7 891.2,282.3 900.9,279.9 910.6,277.5 920.2,275.2 929.9,272.9 939.6,270.6 949.2,268.3 958.9,266.0 968.5,263.8 978.1,261.5 987.8,259.3 997.4,257.1 1007.1,254.9 1016.7,252.8 1026.4,250.6 1036.1,248.4 1045.9,246.3 1055.6,244.2 1065.3,242.1 1075.0,240.0 1084.7,238.0 1094.4,235.9 1104.1,233.9 1113.8,231.9 1123.4,229.9 1133.1,227.9 1142.8,226.0 1152.5,224.0 1162.1,222.1 1171.8,220.2 1181.4,218.4 1191.1,216.5 1200.7,214.7 1210.3,212.8 1219.9,211.0 1229.5,209.2 1239.1,207.5 1248.6,205.7 1258.2,204.0 1267.7,202.3 1277.3,200.6 1286.8,198.9 1296.3,197.2 1305.8,195.5 1315.3,193.9" fill="none" stroke="#ff0000" stroke-width="0.9" />
<polyline points="736.7,326.8 746.4,324.1 756.1,321.4 765.7,318.8 775.3,316.2 785.0,313.6 794.6,311.0 804.3,308.4 813.9,305.8 823.5,303.3 833.1,300.8 842.8,298.3 852.4,295.8 862.0,293.3 871.6,290.9 881.2,288.4 890.8,286.0 900.4,283.6 910.0,281.3 919.5,278.9 929.1,276.6 938.7,274.2 948.3,271.9 957.8,269.6 967.4,267.4 977.0,265.1 986.5,262.9 996.1,260.7 1005.6,258.5 1015.2,256.3 1024.7,254.1 1034.4,251.9 1044.0,249.8 1053.7,247.6 1063.3,245.5 1073.0,243.4 1082.6,241.3 1092.3,239.2 1101.9,237.2 1111.5,235.1 1121.1,233.1 1130.7,231.1 1140.3,229.1 1149.9,227.2 1159.5,225.2 1169.1,223.3 1178.6,221.4 1188.2,219.5 1197.7,217.6 1207.3,215.8 1216.8,213.9 1226.3,212.1 1235.8,210.3 1245.3,208.5 1254.8,206.7 1264.2,205.0 1273.6,203.2 1283.0,201.5 1292.4,199.8 1301.8,198.1 1311.2,196.4 1320.6,194.7" fill="none" stroke="#ff0000" stroke-width="0.9" />
<polyline points="763.6,330.2 773.1,327.5 782.6,324.8 792.1,322.2 801.5,319.6 811.0,317.0 820.4,314.4 829.9,311.9 839.3,309.3 848.8,306.8 858.2,304.3 867.6,301.8 877.0,299.3 886.5,296.8 895.9,294.4 905.3,292.0 914.7,289.6 924.1,287.2 933.4,284.8 942.8,282.4 952.2,280.1 961.6,277.8 970.9,275.4 980.3,273.2 989.6,270.9 999.0,268.6 1008.3,266.4 1017.6,264.1 1026.9,261.9 1036.3,259.7 1045.6,257.6 1055.1,255.4 1064.6,253.2 1074.0,251.0 1083.5,248.8 1093.0,246.7 1102.4,244.6 1111.9,242.5 1121.3,240.4 1130.7,238.3 1140.2,236.3 1149.6,234.2 1159.0,232.2 1168.3,230.2 1177.7,228.2 1187.1,226.3 1196.4,224.3 1205.8,222.4 1215.1,220.5 1224.4,218.6 1233.7,216.7 1243.0,214.9 1252.2,213.0 1261.4,211.2 1270.6,209.4 1279.8,207.6 1288.9,205.8 1298.1,204.0 1307.2,202.3 1316.3,200.5 1325.3,198.8 1334.4,197.0" fill="none" stroke="#ff0000" stroke-width="0.9" />
<polyline points="791.3,333.6 800.6,331.0 809.9,328.4 819.2,325.7 828.5,323.1 837.8,320.6 847.1,318.0 856.3,315.4 865.6,312.9 874.8,310.4 884.0,307.9 893.3,305.4 902.5,302.9 911.7,300.5 920.9,298.0 930.1,295.6 939.3,293.2 948.5,290.8 957.6,288.4 966.8,286.1 976.0,283.7 985.1,281.4 994.3,279.1 1003.4,276.8 1012.5,274.5 1021.6,272.2 1030.7,270.0 1039.8,267.7 1048.9,265.5 1058.0,263.3 1067.1,261.1 1076.4,258.9 1085.7,256.7 1095.0,254.5 1104.3,252.3 1113.6,250.1 1122.9,248.0 1132.1,245.8 1141.4,243.7 1150.6,241.6 1159.8,239.5 1169.0,237.5 1178.2,235.4 1187.4,233.4 1196.5,231.4 1205.7,229.4 1214.8,227.4 1223.9,225.4 1233.0,223.5 1242.1,221.5 1251.1,219.6 1260.2,217.7 1269.1,215.8 1278.1,214.0 1287.0,212.1 1295.9,210.2 1304.7,208.4 1313.6,206.6 1322.4,204.8 1331.1,203.0 1339.9,201.2 1348.7,199.4" fill="none" stroke="#ff0000" stroke-width="0.9" />
<polyline points="805.0,335.4 814.2,332.7 823.4,330.1 832.6,327.5 841.8,324.9 851.0,322.3 860.2,319.7 869.4,317.2 878.5,314.7 887.7,312.2 896.8,309.7 905.9,307.2 915.1,304.7 924.2,302.2 933.3,299.8 942.4,297.4 951.5,295.0 960.5,292.6 969.6,290.2 978.7,287.9 987.7,285.5 996.7,283.2 1005.8,280.9 1014.8,278.6 1023.8,276.3 1032.8,274.0 1041.8,271.8 1050.8,269.5 1059.8,267.3 1068.7,265.1 1077.7,262.9 1086.9,260.7 1096.2,258.4 1105.4,256.2 1114.6,254.0 1123.8,251.8 1133.0,249.6 1142.1,247.5 1151.3,245.4 1160.4,243.2 1169.5,241.1 1178.6,239.1 1187.7,237.0 1196.8,234.9 1205.8,232.9 1214.9,230.9 1223.9,228.9 1232.9,226.9 1241.9,224.9 1250.8,223.0 1259.7,221.1 1268.6,219.1 1277.5,217.2 1286.3,215.3 1295.1,213.4 1303.8,211.6 1312.5,209.7 1321.2,207.9 1329.9,206.0 1338.5,204.2 1347.1,202.4 1355.7,200.6" fill="none" stroke="#ff0000" stroke-width="0.9" />
<polyline points="820.2,337.3 829.3,334.7 838.4,332.0 847.5,329.4 856.6,326.8 865.7,324.3 874.8,321.7 883.9,319.2 892.9,316.6 901.9,314.1 911.0,311.6 920.0,309.1 929.0,306.7 938.0,304.2 947.0,301.8 956.0,299.4 965.0,297.0 973.9,294.6 982.9,292.2 991.8,289.8 1000.7,287.5 1009.7,285.2 1018.6,282.9 1027.5,280.6 1036.4,278.3 1045.2,276.0 1054.1,273.7 1063.0,271.5 1071.8,269.3 1080.7,267.1 1089.5,264.9 1098.6,262.6 1107.8,260.3 1116.9,258.1 1126.0,255.9 1135.1,253.7 1144.2,251.5 1153.2,249.3 1162.3,247.2 1171.3,245.0 1180.3,242.9 1189.3,240.8 1198.2,238.7 1207.2,236.7 1216.1,234.6 1225.0,232.6 1233.9,230.6 1242.8,228.6 1251.7,226.6 1260.5,224.6 1269.3,222.6 1278.1,220.7 1286.8,218.8 1295.4,216.8 1304.1,214.9 1312.6,213.0 1321.2,211.1 1329.7,209.3 1338.2,207.4 1346.6,205.6 1355.0,203.7 1363.5,201.9" fill="none" stroke="#ff0000" stroke-width="0.9" />
<line x1="711.0" y1="312.5" x2="734.8" y2="315.6" stroke="#ff0000" stroke-width="0.8" />
<line x1="738.6" y1="305.2" x2="761.9" y2="308.3" stroke="#ff0000" stroke-width="0.8" />
<line x1="765.7" y1="298.2" x2="788.6" y2="301.3" stroke="#ff0000" stroke-width="0.8" />
<line x1="792.5" y1="291.4" x2="814.9" y2="294.6" stroke="#ff0000" stroke-width="0.8" />
<line x1="818.8" y1="284.9" x2="840.7" y2="288.0" stroke="#ff0000" stroke-width="0.8" />
<line x1="844.7" y1="278.6" x2="866.2" y2="281.8" stroke="#ff0000" stroke-width="0.8" />
<line x1="870.2" y1="272.5" x2="891.3" y2="275.7" stroke="#ff0000" stroke-width="0.8" />
<line x1="895.4" y1="266.7" x2="915.9" y2="269.8" stroke="#ff0000" stroke-width="0.8" />
<line x1="920.1" y1="261.0" x2="940.2" y2="264.2" stroke="#ff0000" stroke-width="0.8" />
<line x1="944.5" y1="255.6" x2="964.1" y2="258.7" stroke="#ff0000" stroke-width="0.8" />
<line x1="968.5" y1="250.3" x2="987.6" y2="253.4" stroke="#ff0000" stroke-width="0.8" />
<line x1="992.2" y1="245.2" x2="1010.8" y2="248.3" stroke="#ff0000" stroke-width="0.8" />
<line x1="1015.4" y1="240.4" x2="1033.7" y2="243.4" stroke="#ff0000" stroke-width="0.8" />
<line x1="1038.3" y1="235.7" x2="1056.3" y2="238.6" stroke="#ff0000" stroke-width="0.8" />
<line x1="1060.9" y1="231.1" x2="1078.5" y2="234.0" stroke="#ff0000" stroke-width="0.8" />
<line x1="1083.1" y1="226.8" x2="1100.3" y2="229.6" stroke="#ff0000" stroke-width="0.8" />
<line x1="1105.0" y1="222.5" x2="1121.8" y2="225.3" stroke="#ff0000" stroke-width="0.8" />
<line x1="1126.6" y1="218.5" x2="1142.9" y2="221.2" stroke="#ff0000" stroke-width="0.8" />
<line x1="1147.8" y1="214.6" x2="1163.8" y2="217.2" stroke="#ff0000" stroke-width="0.8" />
<line x1="1168.7" y1="210.8" x2="1184.2" y2="213.4" stroke="#ff0000" stroke-width="0.8" />
<line x1="1189.3" y1="207.2" x2="1204.4" y2="209.7" stroke="#ff0000" stroke-width="0.8" />
<line x1="1209.5" y1="203.7" x2="1224.2" y2="206.2" stroke="#ff0000" stroke-width="0.8" />
<line x1="1229.5" y1="200.4" x2="1243.6" y2="202.7" stroke="#ff0000" stroke-width="0.8" />
<line x1="1249.1" y1="197.2" x2="1262.8" y2="199.4" stroke="#ff0000" stroke-width="0.8" />
<line x1="1268.5" y1="194.1" x2="1281.6" y2="196.2" stroke="#ff0000" stroke-width="0.8" />
<line x1="1287.6" y1="191.0" x2="1300.1" y2="193.1" stroke="#ff0000" stroke-width="0.8" />
<line x1="1306.6" y1="188.0" x2="1318.6" y2="190.0" stroke="#ff0000" stroke-width="0.8" />
<line x1="721.0" y1="319.3" x2="736.7" y2="321.3" stroke="#ff0000" stroke-width="0.8" />
<line x1="748.3" y1="311.9" x2="763.8" y2="313.9" stroke="#ff0000" stroke-width="0.8" />
<line x1="775.2" y1="304.8" x2="790.4" y2="306.8" stroke="#ff0000" stroke-width="0.8" />
<line x1="801.7" y1="297.9" x2="816.6" y2="300.0" stroke="#ff0000" stroke-width="0.8" />
<line x1="827.8" y1="291.3" x2="842.3" y2="293.4" stroke="#ff0000" stroke-width="0.8" />
<line x1="853.5" y1="284.9" x2="867.7" y2="287.0" stroke="#ff0000" stroke-width="0.8" />
<line x1="878.7" y1="278.7" x2="892.6" y2="280.8" stroke="#ff0000" stroke-width="0.8" />
<line x1="903.6" y1="272.7" x2="917.2" y2="274.8" stroke="#ff0000" stroke-width="0.8" />
<line x1="928.1" y1="267.0" x2="941.3" y2="269.1" stroke="#ff0000" stroke-width="0.8" />
<line x1="952.1" y1="261.4" x2="965.1" y2="263.5" stroke="#ff0000" stroke-width="0.8" />
<line x1="975.8" y1="256.1" x2="988.5" y2="258.1" stroke="#ff0000" stroke-width="0.8" />
<line x1="999.2" y1="250.9" x2="1011.5" y2="252.9" stroke="#ff0000" stroke-width="0.8" />
<line x1="1022.3" y1="245.8" x2="1034.4" y2="247.9" stroke="#ff0000" stroke-width="0.8" />
<line x1="1045.0" y1="241.0" x2="1056.9" y2="243.0" stroke="#ff0000" stroke-width="0.8" />
<line x1="1067.4" y1="236.3" x2="1079.0" y2="238.2" stroke="#ff0000" stroke-width="0.8" />
<line x1="1089.4" y1="231.8" x2="1100.8" y2="233.7" stroke="#ff0000" stroke-width="0.8" />
<line x1="1111.0" y1="227.5" x2="1122.2" y2="229.3" stroke="#ff0000" stroke-width="0.8" />
<line x1="1132.4" y1="223.3" x2="1143.2" y2="225.1" stroke="#ff0000" stroke-width="0.8" />
<line x1="1153.3" y1="219.2" x2="1163.9" y2="221.0" stroke="#ff0000" stroke-width="0.8" />
<line x1="1174.0" y1="215.3" x2="1184.3" y2="217.0" stroke="#ff0000" stroke-width="0.8" />
<line x1="1194.3" y1="211.6" x2="1204.3" y2="213.2" stroke="#ff0000" stroke-width="0.8" />
<line x1="1214.3" y1="207.9" x2="1224.0" y2="209.5" stroke="#ff0000" stroke-width="0.8" />
<line x1="1233.9" y1="204.4" x2="1243.3" y2="206.0" stroke="#ff0000" stroke-width="0.8" />
<line x1="1253.2" y1="201.1" x2="1262.3" y2="202.6" stroke="#ff0000" stroke-width="0.8" />
<line x1="1272.2" y1="197.8" x2="1281.0" y2="199.3" stroke="#ff0000" stroke-width="0.8" />
<line x1="1290.9" y1="194.7" x2="1299.3" y2="196.1" stroke="#ff0000" stroke-width="0.8" />
<line x1="1309.4" y1="191.6" x2="1317.4" y2="192.9" stroke="#ff0000" stroke-width="0.8" />
<line x1="753.6" y1="318.0" x2="763.8" y2="319.3" stroke="#ff0000" stroke-width="0.8" />
<line x1="780.4" y1="310.8" x2="790.4" y2="312.1" stroke="#ff0000" stroke-width="0.8" />
<line x1="806.7" y1="303.8" x2="816.5" y2="305.1" stroke="#ff0000" stroke-width="0.8" />
<line x1="832.6" y1="297.1" x2="842.2" y2="298.4" stroke="#ff0000" stroke-width="0.8" />
<line x1="858.1" y1="290.6" x2="867.5" y2="291.9" stroke="#ff0000" stroke-width="0.8" />
<line x1="883.2" y1="284.3" x2="892.4" y2="285.6" stroke="#ff0000" stroke-width="0.8" />
<line x1="907.9" y1="278.2" x2="916.9" y2="279.6" stroke="#ff0000" stroke-width="0.8" />
<line x1="932.2" y1="272.3" x2="941.0" y2="273.7" stroke="#ff0000" stroke-width="0.8" />
<line x1="956.1" y1="266.7" x2="964.7" y2="268.0" stroke="#ff0000" stroke-width="0.8" />
<line x1="979.6" y1="261.2" x2="988.0" y2="262.5" stroke="#ff0000" stroke-width="0.8" />
<line x1="1002.7" y1="255.9" x2="1010.9" y2="257.3" stroke="#ff0000" stroke-width="0.8" />
<line x1="1025.6" y1="250.8" x2="1033.6" y2="252.1" stroke="#ff0000" stroke-width="0.8" />
<line x1="1048.2" y1="245.8" x2="1056.0" y2="247.1" stroke="#ff0000" stroke-width="0.8" />
<line x1="1070.5" y1="241.0" x2="1078.1" y2="242.3" stroke="#ff0000" stroke-width="0.8" />
<line x1="1092.4" y1="236.3" x2="1099.9" y2="237.6" stroke="#ff0000" stroke-width="0.8" />
<line x1="1113.9" y1="231.9" x2="1121.2" y2="233.1" stroke="#ff0000" stroke-width="0.8" />
<line x1="1135.1" y1="227.5" x2="1142.3" y2="228.7" stroke="#ff0000" stroke-width="0.8" />
<line x1="1155.9" y1="223.4" x2="1162.9" y2="224.5" stroke="#ff0000" stroke-width="0.8" />
<line x1="1176.4" y1="219.3" x2="1183.2" y2="220.5" stroke="#ff0000" stroke-width="0.8" />
<line x1="1196.5" y1="215.5" x2="1203.2" y2="216.6" stroke="#ff0000" stroke-width="0.8" />
<line x1="1216.3" y1="211.7" x2="1222.8" y2="212.8" stroke="#ff0000" stroke-width="0.8" />
<line x1="1235.8" y1="208.1" x2="1242.0" y2="209.1" stroke="#ff0000" stroke-width="0.8" />
<line x1="1254.8" y1="204.6" x2="1260.9" y2="205.6" stroke="#ff0000" stroke-width="0.8" />
<line x1="1273.6" y1="201.2" x2="1279.4" y2="202.2" stroke="#ff0000" stroke-width="0.8" />
<line x1="1292.0" y1="198.0" x2="1297.6" y2="198.9" stroke="#ff0000" stroke-width="0.8" />
<line x1="1310.1" y1="194.8" x2="1315.5" y2="195.7" stroke="#ff0000" stroke-width="0.8" />
<line x1="1328.2" y1="191.6" x2="1333.3" y2="192.5" stroke="#ff0000" stroke-width="0.8" />
<line x1="750.3" y1="323.0" x2="776.9" y2="326.4" stroke="#ff0000" stroke-width="0.8" />
<line x1="777.1" y1="315.7" x2="803.2" y2="319.1" stroke="#ff0000" stroke-width="0.8" />
<line x1="803.4" y1="308.6" x2="829.1" y2="312.1" stroke="#ff0000" stroke-width="0.8" />
<line x1="829.4" y1="301.8" x2="854.5" y2="305.3" stroke="#ff0000" stroke-width="0.8" />
<line x1="854.9" y1="295.1" x2="879.5" y2="298.7" stroke="#ff0000" stroke-width="0.8" />
<line x1="880.0" y1="288.8" x2="904.1" y2="292.3" stroke="#ff0000" stroke-width="0.8" />
<line x1="904.7" y1="282.6" x2="928.3" y2="286.1" stroke="#ff0000" stroke-width="0.8" />
<line x1="928.9" y1="276.6" x2="952.0" y2="280.1" stroke="#ff0000" stroke-width="0.8" />
<line x1="952.8" y1="270.8" x2="975.4" y2="274.4" stroke="#ff0000" stroke-width="0.8" />
<line x1="976.3" y1="265.3" x2="998.3" y2="268.8" stroke="#ff0000" stroke-width="0.8" />
<line x1="999.4" y1="259.9" x2="1020.9" y2="263.4" stroke="#ff0000" stroke-width="0.8" />
<line x1="1022.2" y1="254.7" x2="1043.1" y2="258.1" stroke="#ff0000" stroke-width="0.8" />
<line x1="1044.8" y1="249.6" x2="1065.3" y2="253.0" stroke="#ff0000" stroke-width="0.8" />
<line x1="1067.1" y1="244.7" x2="1087.2" y2="248.0" stroke="#ff0000" stroke-width="0.8" />
<line x1="1089.0" y1="239.9" x2="1108.7" y2="243.2" stroke="#ff0000" stroke-width="0.8" />
<line x1="1110.6" y1="235.3" x2="1129.8" y2="238.5" stroke="#ff0000" stroke-width="0.8" />
<line x1="1131.8" y1="230.9" x2="1150.6" y2="234.0" stroke="#ff0000" stroke-width="0.8" />
<line x1="1152.6" y1="226.6" x2="1171.0" y2="229.7" stroke="#ff0000" stroke-width="0.8" />
<line x1="1173.1" y1="222.5" x2="1191.0" y2="225.5" stroke="#ff0000" stroke-width="0.8" />
<line x1="1193.2" y1="218.5" x2="1210.7" y2="221.4" stroke="#ff0000" stroke-width="0.8" />
<line x1="1213.0" y1="214.7" x2="1230.0" y2="217.5" stroke="#ff0000" stroke-width="0.8" />
<line x1="1232.4" y1="210.9" x2="1248.9" y2="213.7" stroke="#ff0000" stroke-width="0.8" />
<line x1="1251.5" y1="207.4" x2="1267.4" y2="210.0" stroke="#ff0000" stroke-width="0.8" />
<line x1="1270.2" y1="203.9" x2="1285.6" y2="206.4" stroke="#ff0000" stroke-width="0.8" />
<line x1="1288.5" y1="200.5" x2="1303.4" y2="203.0" stroke="#ff0000" stroke-width="0.8" />
<line x1="1306.6" y1="197.3" x2="1320.8" y2="199.6" stroke="#ff0000" stroke-width="0.8" />
<line x1="1324.4" y1="194.1" x2="1338.1" y2="196.3" stroke="#ff0000" stroke-width="0.8" />
<line x1="790.2" y1="322.7" x2="817.4" y2="326.3" stroke="#ff0000" stroke-width="0.8" />
<line x1="816.3" y1="315.6" x2="843.0" y2="319.1" stroke="#ff0000" stroke-width="0.8" />
<line x1="841.9" y1="308.6" x2="868.1" y2="312.2" stroke="#ff0000" stroke-width="0.8" />
<line x1="867.1" y1="301.9" x2="892.8" y2="305.5" stroke="#ff0000" stroke-width="0.8" />
<line x1="891.9" y1="295.4" x2="917.0" y2="299.0" stroke="#ff0000" stroke-width="0.8" />
<line x1="916.3" y1="289.1" x2="940.9" y2="292.8" stroke="#ff0000" stroke-width="0.8" />
<line x1="940.2" y1="283.1" x2="964.3" y2="286.7" stroke="#ff0000" stroke-width="0.8" />
<line x1="963.8" y1="277.2" x2="987.3" y2="280.8" stroke="#ff0000" stroke-width="0.8" />
<line x1="986.9" y1="271.5" x2="1009.9" y2="275.1" stroke="#ff0000" stroke-width="0.8" />
<line x1="1009.7" y1="266.0" x2="1032.1" y2="269.6" stroke="#ff0000" stroke-width="0.8" />
<line x1="1032.1" y1="260.7" x2="1053.9" y2="264.3" stroke="#ff0000" stroke-width="0.8" />
<line x1="1054.3" y1="255.5" x2="1075.6" y2="259.1" stroke="#ff0000" stroke-width="0.8" />
<line x1="1076.3" y1="250.5" x2="1097.3" y2="253.9" stroke="#ff0000" stroke-width="0.8" />
<line x1="1098.0" y1="245.6" x2="1118.6" y2="249.0" stroke="#ff0000" stroke-width="0.8" />
<line x1="1119.4" y1="240.8" x2="1139.4" y2="244.2" stroke="#ff0000" stroke-width="0.8" />
<line x1="1140.3" y1="236.2" x2="1159.9" y2="239.5" stroke="#ff0000" stroke-width="0.8" />
<line x1="1160.9" y1="231.8" x2="1180.1" y2="235.0" stroke="#ff0000" stroke-width="0.8" />
<line x1="1181.1" y1="227.5" x2="1199.8" y2="230.6" stroke="#ff0000" stroke-width="0.8" />
<line x1="1200.9" y1="223.4" x2="1219.2" y2="226.4" stroke="#ff0000" stroke-width="0.8" />
<line x1="1220.4" y1="219.4" x2="1238.2" y2="222.4" stroke="#ff0000" stroke-width="0.8" />
<line x1="1239.5" y1="215.6" x2="1256.8" y2="218.4" stroke="#ff0000" stroke-width="0.8" />
<line x1="1258.3" y1="211.8" x2="1275.0" y2="214.6" stroke="#ff0000" stroke-width="0.8" />
<line x1="1276.6" y1="208.2" x2="1292.8" y2="210.9" stroke="#ff0000" stroke-width="0.8" />
<line x1="1294.6" y1="204.7" x2="1310.2" y2="207.3" stroke="#ff0000" stroke-width="0.8" />
<line x1="1312.2" y1="201.3" x2="1327.2" y2="203.8" stroke="#ff0000" stroke-width="0.8" />
<line x1="1329.5" y1="198.0" x2="1343.9" y2="200.4" stroke="#ff0000" stroke-width="0.8" />
<line x1="1346.7" y1="194.7" x2="1360.5" y2="197.0" stroke="#ff0000" stroke-width="0.8" />
<line x1="804.3" y1="329.9" x2="817.9" y2="331.7" stroke="#ff0000" stroke-width="0.8" />
<line x1="830.2" y1="322.7" x2="843.5" y2="324.4" stroke="#ff0000" stroke-width="0.8" />
<line x1="855.5" y1="315.7" x2="868.6" y2="317.4" stroke="#ff0000" stroke-width="0.8" />
<line x1="880.4" y1="308.8" x2="893.2" y2="310.6" stroke="#ff0000" stroke-width="0.8" />
<line x1="904.9" y1="302.3" x2="917.5" y2="304.1" stroke="#ff0000" stroke-width="0.8" />
<line x1="929.0" y1="295.9" x2="941.2" y2="297.7" stroke="#ff0000" stroke-width="0.8" />
<line x1="952.6" y1="289.7" x2="964.6" y2="291.5" stroke="#ff0000" stroke-width="0.8" />
<line x1="975.8" y1="283.8" x2="987.5" y2="285.6" stroke="#ff0000" stroke-width="0.8" />
<line x1="998.6" y1="278.0" x2="1010.1" y2="279.8" stroke="#ff0000" stroke-width="0.8" />
<line x1="1021.0" y1="272.4" x2="1032.2" y2="274.2" stroke="#ff0000" stroke-width="0.8" />
<line x1="1043.0" y1="267.0" x2="1054.0" y2="268.7" stroke="#ff0000" stroke-width="0.8" />
<line x1="1064.7" y1="261.7" x2="1075.3" y2="263.5" stroke="#ff0000" stroke-width="0.8" />
<line x1="1086.5" y1="256.5" x2="1096.9" y2="258.2" stroke="#ff0000" stroke-width="0.8" />
<line x1="1107.9" y1="251.4" x2="1118.2" y2="253.1" stroke="#ff0000" stroke-width="0.8" />
<line x1="1129.0" y1="246.5" x2="1139.0" y2="248.2" stroke="#ff0000" stroke-width="0.8" />
<line x1="1149.7" y1="241.8" x2="1159.5" y2="243.4" stroke="#ff0000" stroke-width="0.8" />
<line x1="1170.0" y1="237.2" x2="1179.6" y2="238.8" stroke="#ff0000" stroke-width="0.8" />
<line x1="1189.9" y1="232.8" x2="1199.3" y2="234.4" stroke="#ff0000" stroke-width="0.8" />
<line x1="1209.5" y1="228.5" x2="1218.6" y2="230.1" stroke="#ff0000" stroke-width="0.8" />
<line x1="1228.7" y1="224.4" x2="1237.6" y2="225.9" stroke="#ff0000" stroke-width="0.8" />
<line x1="1247.5" y1="220.4" x2="1256.2" y2="221.8" stroke="#ff0000" stroke-width="0.8" />
<line x1="1265.9" y1="216.5" x2="1274.3" y2="217.9" stroke="#ff0000" stroke-width="0.8" />
<line x1="1283.9" y1="212.7" x2="1292.0" y2="214.1" stroke="#ff0000" stroke-width="0.8" />
<line x1="1301.5" y1="209.1" x2="1309.3" y2="210.4" stroke="#ff0000" stroke-width="0.8" />
<line x1="1318.7" y1="205.5" x2="1326.2" y2="206.8" stroke="#ff0000" stroke-width="0.8" />
<line x1="1335.5" y1="202.1" x2="1342.8" y2="203.3" stroke="#ff0000" stroke-width="0.8" />
<line x1="1352.2" y1="198.7" x2="1359.2" y2="199.8" stroke="#ff0000" stroke-width="0.8" />
<line x1="830.8" y1="328.0" x2="845.7" y2="329.9" stroke="#ff0000" stroke-width="0.8" />
<line x1="856.1" y1="320.9" x2="870.8" y2="322.8" stroke="#ff0000" stroke-width="0.8" />
<line x1="881.0" y1="314.0" x2="895.4" y2="315.9" stroke="#ff0000" stroke-width="0.8" />
<line x1="905.5" y1="307.3" x2="919.5" y2="309.3" stroke="#ff0000" stroke-width="0.8" />
<line x1="929.4" y1="300.8" x2="943.2" y2="302.8" stroke="#ff0000" stroke-width="0.8" />
<line x1="953.0" y1="294.6" x2="966.5" y2="296.6" stroke="#ff0000" stroke-width="0.8" />
<line x1="976.2" y1="288.5" x2="989.3" y2="290.5" stroke="#ff0000" stroke-width="0.8" />
<line x1="998.9" y1="282.6" x2="1011.8" y2="284.6" stroke="#ff0000" stroke-width="0.8" />
<line x1="1021.2" y1="276.9" x2="1033.8" y2="278.9" stroke="#ff0000" stroke-width="0.8" />
<line x1="1043.2" y1="271.4" x2="1055.5" y2="273.4" stroke="#ff0000" stroke-width="0.8" />
<line x1="1064.7" y1="266.1" x2="1076.7" y2="268.0" stroke="#ff0000" stroke-width="0.8" />
<line x1="1086.2" y1="260.8" x2="1097.9" y2="262.8" stroke="#ff0000" stroke-width="0.8" />
<line x1="1107.6" y1="255.7" x2="1119.1" y2="257.6" stroke="#ff0000" stroke-width="0.8" />
<line x1="1128.7" y1="250.6" x2="1139.9" y2="252.5" stroke="#ff0000" stroke-width="0.8" />
<line x1="1149.4" y1="245.8" x2="1160.4" y2="247.6" stroke="#ff0000" stroke-width="0.8" />
<line x1="1169.6" y1="241.1" x2="1180.4" y2="242.9" stroke="#ff0000" stroke-width="0.8" />
<line x1="1189.5" y1="236.6" x2="1200.1" y2="238.3" stroke="#ff0000" stroke-width="0.8" />
<line x1="1209.1" y1="232.2" x2="1219.3" y2="233.9" stroke="#ff0000" stroke-width="0.8" />
<line x1="1228.2" y1="227.9" x2="1238.2" y2="229.6" stroke="#ff0000" stroke-width="0.8" />
<line x1="1247.0" y1="223.8" x2="1256.7" y2="225.4" stroke="#ff0000" stroke-width="0.8" />
<line x1="1265.3" y1="219.8" x2="1274.8" y2="221.4" stroke="#ff0000" stroke-width="0.8" />
<line x1="1283.3" y1="216.0" x2="1292.4" y2="217.5" stroke="#ff0000" stroke-width="0.8" />
<line x1="1300.8" y1="212.2" x2="1309.6" y2="213.7" stroke="#ff0000" stroke-width="0.8" />
<line x1="1317.9" y1="208.6" x2="1326.4" y2="210.0" stroke="#ff0000" stroke-width="0.8" />
<line x1="1334.6" y1="205.0" x2="1342.8" y2="206.4" stroke="#ff0000" stroke-width="0.8" />
<line x1="1351.0" y1="201.6" x2="1358.9" y2="202.9" stroke="#ff0000" stroke-width="0.8" />
<line x1="1367.4" y1="198.1" x2="1374.9" y2="199.4" stroke="#ff0000" stroke-width="0.8" />
<line x1="833.0" y1="333.6" x2="862.4" y2="337.4" stroke="#ff0000" stroke-width="0.8" />
<line x1="858.3" y1="326.4" x2="887.2" y2="330.2" stroke="#ff0000" stroke-width="0.8" />
<line x1="883.1" y1="319.4" x2="911.4" y2="323.2" stroke="#ff0000" stroke-width="0.8" />
<line x1="907.5" y1="312.6" x2="935.2" y2="316.5" stroke="#ff0000" stroke-width="0.8" />
<line x1="931.4" y1="306.0" x2="958.6" y2="309.9" stroke="#ff0000" stroke-width="0.8" />
<line x1="954.9" y1="299.7" x2="981.5" y2="303.6" stroke="#ff0000" stroke-width="0.8" />
<line x1="977.9" y1="293.5" x2="1004.0" y2="297.4" stroke="#ff0000" stroke-width="0.8" />
<line x1="1000.6" y1="287.5" x2="1026.1" y2="291.4" stroke="#ff0000" stroke-width="0.8" />
<line x1="1022.8" y1="281.8" x2="1047.7" y2="285.6" stroke="#ff0000" stroke-width="0.8" />
<line x1="1044.6" y1="276.1" x2="1069.0" y2="280.0" stroke="#ff0000" stroke-width="0.8" />
<line x1="1066.1" y1="270.7" x2="1089.8" y2="274.6" stroke="#ff0000" stroke-width="0.8" />
<line x1="1087.1" y1="265.4" x2="1110.3" y2="269.3" stroke="#ff0000" stroke-width="0.8" />
<line x1="1108.5" y1="260.2" x2="1131.2" y2="263.9" stroke="#ff0000" stroke-width="0.8" />
<line x1="1129.5" y1="255.0" x2="1151.8" y2="258.7" stroke="#ff0000" stroke-width="0.8" />
<line x1="1150.2" y1="250.1" x2="1171.9" y2="253.7" stroke="#ff0000" stroke-width="0.8" />
<line x1="1170.4" y1="245.3" x2="1191.7" y2="248.8" stroke="#ff0000" stroke-width="0.8" />
<line x1="1190.2" y1="240.6" x2="1211.1" y2="244.1" stroke="#ff0000" stroke-width="0.8" />
<line x1="1209.7" y1="236.1" x2="1230.0" y2="239.5" stroke="#ff0000" stroke-width="0.8" />
<line x1="1228.8" y1="231.7" x2="1248.6" y2="235.0" stroke="#ff0000" stroke-width="0.8" />
<line x1="1247.5" y1="227.5" x2="1266.8" y2="230.7" stroke="#ff0000" stroke-width="0.8" />
<line x1="1265.8" y1="223.4" x2="1284.6" y2="226.5" stroke="#ff0000" stroke-width="0.8" />
<line x1="1283.6" y1="219.4" x2="1301.9" y2="222.5" stroke="#ff0000" stroke-width="0.8" />
<line x1="1301.1" y1="215.6" x2="1318.7" y2="218.5" stroke="#ff0000" stroke-width="0.8" />
<line x1="1318.1" y1="211.8" x2="1335.1" y2="214.7" stroke="#ff0000" stroke-width="0.8" />
<line x1="1334.6" y1="208.2" x2="1351.1" y2="210.9" stroke="#ff0000" stroke-width="0.8" />
<line x1="1350.8" y1="204.6" x2="1366.6" y2="207.2" stroke="#ff0000" stroke-width="0.8" />
<line x1="1366.9" y1="201.1" x2="1382.0" y2="203.6" stroke="#ff0000" stroke-width="0.8" />
<polygon points="683.0,320.0 850.0,341.0 850.0,346.0 683.0,325.0" fill="#d85a70" stroke="none" stroke-width="1" />
<polygon points="850.0,341.0 860.5,337.9 871.1,334.8 881.7,331.8 892.2,328.7 902.8,325.7 913.3,322.7 923.8,319.7 934.4,316.7 945.0,313.7 955.5,310.8 966.0,307.8 976.6,304.9 987.2,302.0 997.7,299.1 1008.2,296.3 1018.8,293.4 1029.3,290.6 1039.9,287.7 1050.4,284.9 1061.0,282.1 1071.5,279.3 1082.1,276.6 1092.6,273.8 1103.2,271.1 1113.8,268.4 1124.3,265.7 1134.8,263.0 1145.4,260.3 1155.9,257.7 1166.5,255.0 1177.0,252.4 1187.6,249.8 1198.1,247.2 1208.7,244.6 1219.2,242.1 1229.8,239.5 1240.3,237.0 1250.9,234.5 1261.5,232.0 1272.0,229.5 1272.0,235.0 1261.5,237.5 1250.9,240.0 1240.3,242.5 1229.8,245.0 1219.2,247.6 1208.7,250.1 1198.1,252.7 1187.6,255.3 1177.0,257.9 1166.5,260.5 1155.9,263.2 1145.4,265.8 1134.8,268.5 1124.3,271.2 1113.8,273.9 1103.2,276.6 1092.6,279.3 1082.1,282.1 1071.5,284.8 1061.0,287.6 1050.4,290.4 1039.9,293.2 1029.3,296.1 1018.8,298.9 1008.2,301.8 997.7,304.6 987.2,307.5 976.6,310.4 966.0,313.3 955.5,316.3 945.0,319.2 934.4,322.2 923.8,325.2 913.3,328.2 902.8,331.2 892.2,334.2 881.7,337.3 871.1,340.3 860.5,343.4 850.0,346.5" fill="#e05c70" stroke="none" stroke-width="1" />
<polyline points="850.0,343.8 860.5,340.7 871.1,337.6 881.7,334.6 892.2,331.5 902.8,328.5 913.3,325.5 923.8,322.5 934.4,319.5 945.0,316.5 955.5,313.6 966.0,310.6 976.6,307.7 987.2,304.8 997.7,301.9 1008.2,299.1 1018.8,296.2 1029.3,293.4 1039.9,290.5 1050.4,287.7 1061.0,284.9 1071.5,282.1 1082.1,279.4 1092.6,276.6 1103.2,273.9 1113.8,271.2 1124.3,268.5 1134.8,265.8 1145.4,263.1 1155.9,260.5 1166.5,257.8 1177.0,255.2 1187.6,252.6 1198.1,250.0 1208.7,247.4 1219.2,244.9 1229.8,242.3 1240.3,239.8 1250.9,237.3 1261.5,234.8 1272.0,232.3" fill="none" stroke="#8e8e8e" stroke-width="2" />
<line x1="683.0" y1="322.5" x2="850.0" y2="343.5" stroke="#8e8e8e" stroke-width="1.5" />
<polyline points="683.0,320.0 697.7,316.0 712.5,312.1 727.2,308.2 741.9,304.3 756.6,300.5 771.4,296.7 786.1,293.0 800.8,289.3 815.5,285.7 830.3,282.1 845.0,278.5 859.7,275.0 874.4,271.5 889.2,268.1 903.9,264.7 918.6,261.3 933.3,258.0 948.1,254.8 962.8,251.5 977.5,248.4 992.2,245.2 1007.0,242.1 1021.7,239.1 1036.4,236.0 1051.1,233.1 1065.9,230.1 1080.6,227.3 1095.3,224.4 1110.0,221.6 1124.8,218.8 1139.5,216.1 1154.2,213.4 1168.9,210.8 1183.7,208.2 1198.4,205.6 1213.1,203.1 1227.8,200.7 1242.6,198.2 1257.3,195.8 1272.0,193.5" fill="none" stroke="#ff0000" stroke-width="1.5" />
<polyline points="850.0,341.0 860.5,337.9 871.1,334.8 881.7,331.8 892.2,328.7 902.8,325.7 913.3,322.7 923.8,319.7 934.4,316.7 945.0,313.7 955.5,310.8 966.0,307.8 976.6,304.9 987.2,302.0 997.7,299.1 1008.2,296.3 1018.8,293.4 1029.3,290.6 1039.9,287.7 1050.4,284.9 1061.0,282.1 1071.5,279.3 1082.1,276.6 1092.6,273.8 1103.2,271.1 1113.8,268.4 1124.3,265.7 1134.8,263.0 1145.4,260.3 1155.9,257.7 1166.5,255.0 1177.0,252.4 1187.6,249.8 1198.1,247.2 1208.7,244.6 1219.2,242.1 1229.8,239.5 1240.3,237.0 1250.9,234.5 1261.5,232.0 1272.0,229.5" fill="none" stroke="#ff0000" stroke-width="1.3" />
<polyline points="850.0,346.5 860.5,343.4 871.1,340.3 881.7,337.3 892.2,334.2 902.8,331.2 913.3,328.2 923.8,325.2 934.4,322.2 945.0,319.2 955.5,316.3 966.0,313.3 976.6,310.4 987.2,307.5 997.7,304.6 1008.2,301.8 1018.8,298.9 1029.3,296.1 1039.9,293.2 1050.4,290.4 1061.0,287.6 1071.5,284.8 1082.1,282.1 1092.6,279.3 1103.2,276.6 1113.8,273.9 1124.3,271.2 1134.8,268.5 1145.4,265.8 1155.9,263.2 1166.5,260.5 1177.0,257.9 1187.6,255.3 1198.1,252.7 1208.7,250.1 1219.2,247.6 1229.8,245.0 1240.3,242.5 1250.9,240.0 1261.5,237.5 1272.0,235.0" fill="none" stroke="#ff0000" stroke-width="1.2" />
<polyline points="683.0,320.0 850.0,341.0 850.0,346.0 683.0,325.0 683.0,320.0" fill="none" stroke="#ff0000" stroke-width="1.2" />
<line x1="707.2" y1="323.0" x2="707.2" y2="328.0" stroke="#ff0000" stroke-width="0.8" />
<line x1="723.1" y1="325.0" x2="723.1" y2="330.0" stroke="#ff0000" stroke-width="0.8" />
<line x1="726.4" y1="325.5" x2="726.4" y2="330.5" stroke="#ff0000" stroke-width="0.8" />
<line x1="736.8" y1="326.8" x2="736.8" y2="331.8" stroke="#ff0000" stroke-width="0.8" />
<line x1="763.7" y1="330.1" x2="763.7" y2="335.1" stroke="#ff0000" stroke-width="0.8" />
<line x1="791.4" y1="333.6" x2="791.4" y2="338.6" stroke="#ff0000" stroke-width="0.8" />
<line x1="805.1" y1="335.4" x2="805.1" y2="340.4" stroke="#ff0000" stroke-width="0.8" />
<line x1="820.3" y1="337.3" x2="820.3" y2="342.3" stroke="#ff0000" stroke-width="0.8" />
<polyline points="71.0,581.0 67.8,583.0 74.4,585.6 68.1,588.2 74.7,590.9 68.4,593.5 75.0,596.1 68.7,598.8 75.2,601.4 72.0,604.0 75.0,609.0 72.0,612.0 73.0,616.0" fill="none" stroke="#18e018" stroke-width="1.6" /><line x1="69.0" y1="616.0" x2="77.0" y2="617.0" stroke="#18e018" stroke-width="1.6" />
<polyline points="99.0,586.0 95.8,588.0 102.4,590.6 96.1,593.2 102.7,595.9 96.4,598.5 103.0,601.1 96.7,603.8 103.2,606.4 100.0,609.0 103.0,614.0 100.0,617.0 101.0,621.0" fill="none" stroke="#18e018" stroke-width="1.6" /><line x1="97.0" y1="621.0" x2="105.0" y2="622.0" stroke="#18e018" stroke-width="1.6" />
<polyline points="189.0,599.0 185.8,601.0 192.3,603.6 186.1,606.2 192.6,608.9 186.4,611.5 192.9,614.1 186.7,616.8 193.2,619.4 190.0,622.0 193.0,627.0 190.0,630.0 191.0,634.0" fill="none" stroke="#18e018" stroke-width="1.6" /><line x1="187.0" y1="634.0" x2="195.0" y2="635.0" stroke="#18e018" stroke-width="1.6" />
<polyline points="217.0,604.0 213.8,606.0 220.3,608.6 214.1,611.2 220.6,613.9 214.4,616.5 220.9,619.1 214.7,621.8 221.2,624.4 218.0,627.0 221.0,632.0 218.0,635.0 219.0,639.0" fill="none" stroke="#18e018" stroke-width="1.6" /><line x1="215.0" y1="639.0" x2="223.0" y2="640.0" stroke="#18e018" stroke-width="1.6" />
<g stroke="#22d8e8" stroke-width="1.4" fill="none"><line x1="133.5" y1="531" x2="133.5" y2="522"/><path d="M126,533 Q130,531 140,533"/></g><rect x="131" y="526" width="5" height="6" fill="#c8b890"/><rect x="136" y="526" width="3" height="6" fill="#22d8e8"/>
<g stroke="#22d8e8" stroke-width="1.2" fill="none"><path d="M131,512 h4 l-4,6 h4"/><path d="M121,527 l2,3 l2,-3 M123,530 v3"/><path d="M146,526 l5,5 M151,526 l-5,5"/></g>
<g stroke="#20e020" stroke-width="1.6" fill="none"><path d="M609.5,476 V466 M606,472 L610,470 L613,471 M608,466 l3,-1"/></g>
<polyline points="1186.0,287.0 1189.0,280.0 1193.0,282.0" fill="none" stroke="#20e020" stroke-width="1.5" />
</svg>
<!-- status bar -->
<rect x="8" y="758" width="1264" height="21" fill="#f0f0f0"/>
<text x="26" y="773.7" font-size="11" fill="#111" font-weight="normal" textLength="43" lengthAdjust="spacingAndGlyphs" >3-D View</text>
<text x="922" y="772.5" font-size="11" fill="#111" font-weight="normal" textLength="139" lengthAdjust="spacingAndGlyphs" xml:space="preserve">X1525.81&#160;&#160;Y-235.02&#160;&#160;Z-73.08</text>
<rect x="1087" y="758" width="51" height="21" fill="#fff"/>
<rect x="1087" y="758" width="1" height="4" fill="#555"/>
<rect x="1104" y="758" width="17" height="4" fill="#4a7a2a"/><rect x="1106" y="758.5" width="12" height="2.5" fill="#9ad830"/>
<rect x="1139.5" y="758.5" width="46" height="20" rx="2" fill="#e4e4e4" stroke="#8a8a8a"/>
<path d="M1174,766 h9 l-4.5,4.5z" fill="#111"/>
<rect x="1187.5" y="758.5" width="83" height="20" rx="2" fill="#ececec" stroke="#8a8a8a"/>
<text x="1191" y="772.5" font-size="11" fill="#111" font-weight="normal" textLength="40.6" lengthAdjust="spacingAndGlyphs" >Kip, in, F</text>
<path d="M1258,766 h9 l-4.5,4.5z" fill="#111"/>
</svg>
</body></html>
